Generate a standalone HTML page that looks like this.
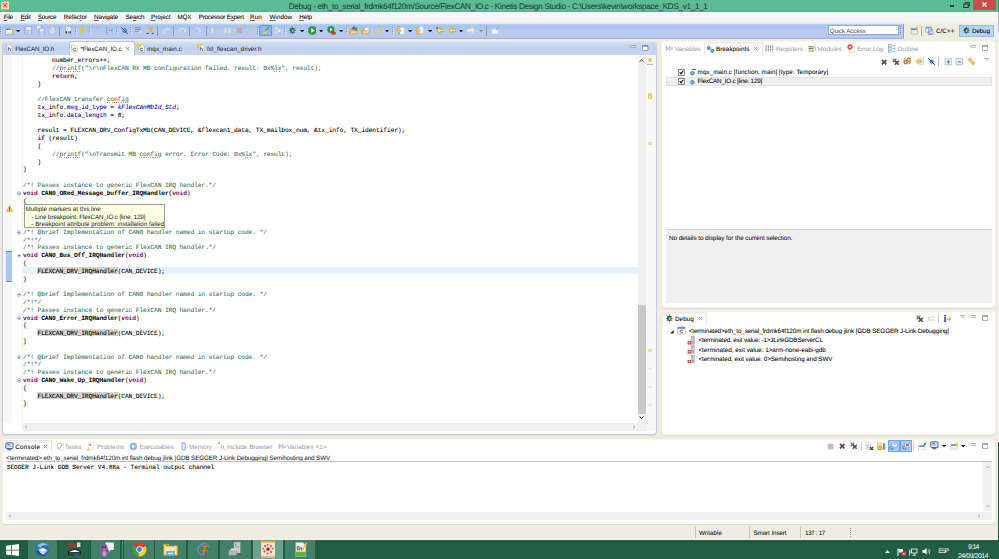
<!DOCTYPE html>
<html lang="en"><head><meta charset="utf-8"><title>Debug - Kinetis Design Studio</title>
<style>
html,body{margin:0;padding:0;}
body{width:999px;height:559px;overflow:hidden;position:relative;background:#f0ece0;font-family:"Liberation Sans",sans-serif;text-rendering:geometricPrecision;-webkit-font-smoothing:antialiased;}
body div,body span,body svg{position:absolute;box-sizing:border-box;}
u{text-decoration-thickness:.5px;text-underline-offset:.5px;text-decoration-color:rgba(0,0,0,.4);}
body span{white-space:pre;}
.d{text-shadow:0 0 .12px rgba(0,0,0,.3);}
.m{font-family:"Liberation Mono",monospace;text-shadow:0 0 .14px rgba(0,0,0,.28);}
</style></head>
<body>
<div style="left:0.00px;top:0.00px;width:999.00px;height:11.80px;background:#5bbb92;border-bottom:0.5px solid #55b389;"></div>
<span style="left:288.75px;top:2px;font-size:8.2px;line-height:10.66px;color:#1c3a2e;letter-spacing:-0.336px;text-shadow:none;">Debug - eth_to_serial_frdmk64f120m/Source/FlexCAN_IO.c - Kinetis Design Studio - C:\Users\kevin\workspace_KDS_v1_1_1</span>
<div style="left:973.00px;top:0.00px;width:23.00px;height:9.50px;background:#c7504f;"></div>
<div style="left:0.00px;top:11.80px;width:999.00px;height:10.60px;background:linear-gradient(#fdfdfd 0%,#f5f6f7 10%,#f5f6f7 87%,#f1f0ea 92%,#f1f0ea 100%);"></div>
<span class="d" style="left:3.70px;top:14px;font-size:6.3px;line-height:8.19px;color:#151515;letter-spacing:-0.263px;"><u>F</u>ile</span>
<span class="d" style="left:20.40px;top:14px;font-size:6.3px;line-height:8.19px;color:#151515;letter-spacing:-0.164px;"><u>E</u>dit</span>
<span class="d" style="left:37.80px;top:14px;font-size:6.3px;line-height:8.19px;color:#151515;letter-spacing:-0.260px;"><u>S</u>ource</span>
<span class="d" style="left:63.80px;top:14px;font-size:6.3px;line-height:8.19px;color:#151515;letter-spacing:-0.101px;">Refac<u>t</u>or</span>
<span class="d" style="left:94.10px;top:14px;font-size:6.3px;line-height:8.19px;color:#151515;letter-spacing:-0.083px;"><u>N</u>avigate</span>
<span class="d" style="left:125.60px;top:14px;font-size:6.3px;line-height:8.19px;color:#151515;letter-spacing:-0.210px;">Se<u>a</u>rch</span>
<span class="d" style="left:151.10px;top:14px;font-size:6.3px;line-height:8.19px;color:#151515;letter-spacing:-0.030px;"><u>P</u>roject</span>
<span class="d" style="left:177.50px;top:14px;font-size:6.3px;line-height:8.19px;color:#151515;letter-spacing:-0.183px;">MQX</span>
<span class="d" style="left:198.70px;top:14px;font-size:6.3px;line-height:8.19px;color:#151515;letter-spacing:-0.207px;">Processor E<u>x</u>pert</span>
<span class="d" style="left:250.00px;top:14px;font-size:6.3px;line-height:8.19px;color:#151515;letter-spacing:0.148px;"><u>R</u>un</span>
<span class="d" style="left:269.50px;top:14px;font-size:6.3px;line-height:8.19px;color:#151515;letter-spacing:0.016px;"><u>W</u>indow</span>
<span class="d" style="left:299.20px;top:14px;font-size:6.3px;line-height:8.19px;color:#151515;letter-spacing:-0.039px;"><u>H</u>elp</span>
<div style="left:0.00px;top:22.30px;width:999.00px;height:16.60px;background:#f0ece0;"></div>
<div style="left:0.00px;top:22.30px;width:904.40px;height:16.60px;background:linear-gradient(#eef2fb 0%,#dfe8f9 8%,#a9c6ee 17%,#a9c5ee 37%,#b6c9ef 43%,#b7c9ee 92%,#9db1d9 95%,#9db1d9 100%);"></div>
<div style="left:904.40px;top:22.30px;width:95.00px;height:2.00px;background:linear-gradient(#f3f3f0,#f2eddf);"></div>
<div style="left:0.00px;top:38.90px;width:999.00px;height:501.10px;background:#f0ece0;"></div>
<div style="left:0.00px;top:539.00px;width:999.00px;height:1.00px;background:#f7f4ea;"></div>
<div style="left:0.00px;top:540.00px;width:999.00px;height:19.00px;background:#215c45;"></div>
<div style="left:2.00px;top:41.00px;width:655.00px;height:394.00px;background:#fff;border:1px solid #bccdf0;border-top:none;border-radius:4px;box-shadow:0 1px 1px rgba(110,100,70,.13);"></div>
<div style="left:2.00px;top:41.00px;width:655.00px;height:14.20px;background:linear-gradient(#dde8f9 0%,#cfdef6 15%,#c4d6f3 30%,#bcd2f1 55%,#c6d5f2 62%,#c9d7f4 94%,#bccbe8 100%);border-radius:4px 4px 0 0;"></div>
<div style="left:69.00px;top:41.30px;width:66.30px;height:14.20px;background:#fff;border-radius:3px 3px 0 0;border:0.5px solid #b4c6ea;border-bottom:none;"></div>
<span style="left:15.30px;top:46px;font-size:6.3px;line-height:8.19px;color:#222;letter-spacing:-0.159px;text-shadow:none;">FlexCAN_IO.h</span>
<span style="left:80.50px;top:46px;font-size:6.3px;line-height:8.19px;color:#111;letter-spacing:-0.132px;text-shadow:none;">*FlexCAN_IO.c</span>
<span style="left:147.00px;top:46px;font-size:6.3px;line-height:8.19px;color:#222;letter-spacing:0.104px;text-shadow:none;">mqx_main.c</span>
<span style="left:207.00px;top:46px;font-size:6.3px;line-height:8.19px;color:#222;letter-spacing:0.029px;text-shadow:none;">fsl_flexcan_driver.h</span>
<div style="left:2.80px;top:55.50px;width:9.20px;height:367.00px;background:#f8f8f8;"></div>
<div style="left:21.80px;top:55.50px;width:0.50px;height:367.00px;background:#f1f1f1;"></div>
<div style="left:6.20px;top:251.10px;width:5.70px;height:30.90px;background:#a8c7f4;border-top:0.7px solid #5f8fdc;border-bottom:0.7px solid #5f8fdc;"></div>
<div style="left:23.00px;top:266.80px;width:615.00px;height:7.20px;background:#e8f2fe;"></div>
<div style="left:638.00px;top:55.50px;width:8.00px;height:367.80px;background:#f0f0f0;"></div>
<div style="left:638.00px;top:305.00px;width:8.00px;height:108.50px;background:#c9c9c9;"></div>
<div style="left:646.00px;top:55.50px;width:10.00px;height:375.80px;background:#f8f8f8;"></div>
<div style="left:22.00px;top:423.20px;width:616.00px;height:7.60px;background:#f0f0f0;"></div>
<div style="left:638.00px;top:423.20px;width:8.00px;height:7.60px;background:#f0f0f0;"></div>
<span class="m" style="left:52.12px;top:57px;font-size:6.3px;line-height:7.8px;color:#000;letter-spacing:-0.140px;">number_errors++;</span>
<span class="m" style="left:52.12px;top:65px;font-size:6.3px;line-height:7.8px;color:#3f7f5f;letter-spacing:-0.140px;">//printf("\r\nFlexCAN RX MB configuration failed. result: 0x%lx", result);</span>
<span class="m" style="left:52.12px;top:73px;font-size:6.3px;line-height:7.8px;color:#7f0055;font-weight:bold;text-shadow:none;letter-spacing:-0.140px;">return</span>
<span class="m" style="left:73.96px;top:73px;font-size:6.3px;line-height:7.8px;color:#000;letter-spacing:-0.140px;">;</span>
<span class="m" style="left:37.56px;top:81px;font-size:6.3px;line-height:7.8px;color:#000;letter-spacing:-0.140px;">}</span>
<span class="m" style="left:37.56px;top:96px;font-size:6.3px;line-height:7.8px;color:#3f7f5f;letter-spacing:-0.140px;">//FlexCAN transfer config</span>
<span class="m" style="left:37.56px;top:104px;font-size:6.3px;line-height:7.8px;color:#000;letter-spacing:-0.140px;">tx_info.</span>
<span class="m" style="left:66.68px;top:104px;font-size:6.3px;line-height:7.8px;color:#0000c0;letter-spacing:-0.140px;">msg_id_type</span>
<span class="m" style="left:106.72px;top:104px;font-size:6.3px;line-height:7.8px;color:#000;letter-spacing:-0.140px;"> = </span>
<span class="m" style="left:117.64px;top:104px;font-size:6.3px;line-height:7.8px;color:#0000c0;font-style:italic;letter-spacing:-0.140px;">kFlexCanMbId_Std</span>
<span class="m" style="left:175.88px;top:104px;font-size:6.3px;line-height:7.8px;color:#000;letter-spacing:-0.140px;">;</span>
<span class="m" style="left:37.56px;top:112px;font-size:6.3px;line-height:7.8px;color:#000;letter-spacing:-0.140px;">tx_info.</span>
<span class="m" style="left:66.68px;top:112px;font-size:6.3px;line-height:7.8px;color:#0000c0;letter-spacing:-0.140px;">data_length</span>
<span class="m" style="left:106.72px;top:112px;font-size:6.3px;line-height:7.8px;color:#000;letter-spacing:-0.140px;"> = 8;</span>
<span class="m" style="left:37.56px;top:127px;font-size:6.3px;line-height:7.8px;color:#000;letter-spacing:-0.140px;">result = FLEXCAN_DRV_ConfigTxMb(CAN_DEVICE, &amp;flexcan1_data, TX_mailbox_num, &amp;tx_info, TX_identifier);</span>
<span class="m" style="left:37.56px;top:135px;font-size:6.3px;line-height:7.8px;color:#7f0055;font-weight:bold;text-shadow:none;letter-spacing:-0.140px;">if</span>
<span class="m" style="left:44.84px;top:135px;font-size:6.3px;line-height:7.8px;color:#000;letter-spacing:-0.140px;"> (result)</span>
<span class="m" style="left:37.56px;top:143px;font-size:6.3px;line-height:7.8px;color:#000;letter-spacing:-0.140px;">{</span>
<span class="m" style="left:52.12px;top:151px;font-size:6.3px;line-height:7.8px;color:#3f7f5f;letter-spacing:-0.140px;">//printf("\nTransmit MB config error. Error Code: 0x%lx", result);</span>
<span class="m" style="left:37.56px;top:159px;font-size:6.3px;line-height:7.8px;color:#000;letter-spacing:-0.140px;">}</span>
<span class="m" style="left:23.00px;top:166px;font-size:6.3px;line-height:7.8px;color:#000;letter-spacing:-0.140px;">}</span>
<span class="m" style="left:23.00px;top:182px;font-size:6.3px;line-height:7.8px;color:#3f7f5f;letter-spacing:-0.140px;">/*! Passes instance to generic FlexCAN IRQ handler.*/</span>
<span class="m" style="left:23.00px;top:190px;font-size:6.3px;line-height:7.8px;color:#7f0055;font-weight:bold;text-shadow:none;letter-spacing:-0.140px;">void</span>
<span class="m" style="left:37.56px;top:190px;font-size:6.3px;line-height:7.8px;color:#000;font-weight:bold;text-shadow:none;letter-spacing:-0.140px;"> CAN0_ORed_Message_buffer_IRQHandler</span>
<span class="m" style="left:168.60px;top:190px;font-size:6.3px;line-height:7.8px;color:#000;letter-spacing:-0.140px;">(</span>
<span class="m" style="left:172.24px;top:190px;font-size:6.3px;line-height:7.8px;color:#7f0055;font-weight:bold;text-shadow:none;letter-spacing:-0.140px;">void</span>
<span class="m" style="left:186.80px;top:190px;font-size:6.3px;line-height:7.8px;color:#000;letter-spacing:-0.140px;">)</span>
<span class="m" style="left:23.00px;top:198px;font-size:6.3px;line-height:7.8px;color:#000;letter-spacing:-0.140px;">{</span>
<div style="left:37.26px;top:203.90px;width:80.58px;height:7.40px;background:#d4d4d4;"></div>
<span class="m" style="left:37.56px;top:205px;font-size:6.3px;line-height:7.8px;color:#000;letter-spacing:-0.140px;">FLEXCAN_DRV_IRQHandler</span>
<span class="m" style="left:117.64px;top:205px;font-size:6.3px;line-height:7.8px;color:#000;letter-spacing:-0.140px;">(CAN_DEVICE);</span>
<span class="m" style="left:23.00px;top:213px;font-size:6.3px;line-height:7.8px;color:#000;letter-spacing:-0.140px;">}</span>
<span class="m" style="left:23.00px;top:229px;font-size:6.3px;line-height:7.8px;color:#3f7f5f;letter-spacing:-0.140px;">/*! @brief Implementation of CAN0 handler named in startup code. */</span>
<span class="m" style="left:23.00px;top:237px;font-size:6.3px;line-height:7.8px;color:#3f7f5f;letter-spacing:-0.140px;">/*!*/</span>
<span class="m" style="left:23.00px;top:244px;font-size:6.3px;line-height:7.8px;color:#3f7f5f;letter-spacing:-0.140px;">/*! Passes instance to generic FlexCAN IRQ handler.*/</span>
<span class="m" style="left:23.00px;top:252px;font-size:6.3px;line-height:7.8px;color:#7f0055;font-weight:bold;text-shadow:none;letter-spacing:-0.140px;">void</span>
<span class="m" style="left:37.56px;top:252px;font-size:6.3px;line-height:7.8px;color:#000;font-weight:bold;text-shadow:none;letter-spacing:-0.140px;"> CAN0_Bus_Off_IRQHandler</span>
<span class="m" style="left:124.92px;top:252px;font-size:6.3px;line-height:7.8px;color:#000;letter-spacing:-0.140px;">(</span>
<span class="m" style="left:128.56px;top:252px;font-size:6.3px;line-height:7.8px;color:#7f0055;font-weight:bold;text-shadow:none;letter-spacing:-0.140px;">void</span>
<span class="m" style="left:143.12px;top:252px;font-size:6.3px;line-height:7.8px;color:#000;letter-spacing:-0.140px;">)</span>
<span class="m" style="left:23.00px;top:260px;font-size:6.3px;line-height:7.8px;color:#000;letter-spacing:-0.140px;">{</span>
<div style="left:37.26px;top:266.90px;width:80.58px;height:7.40px;background:#d4d4d4;"></div>
<span class="m" style="left:37.56px;top:268px;font-size:6.3px;line-height:7.8px;color:#000;letter-spacing:-0.140px;">FLEXCAN_DRV_IRQHandler</span>
<span class="m" style="left:117.64px;top:268px;font-size:6.3px;line-height:7.8px;color:#000;letter-spacing:-0.140px;">(CAN_DEVICE);</span>
<span class="m" style="left:23.00px;top:276px;font-size:6.3px;line-height:7.8px;color:#000;letter-spacing:-0.140px;">}</span>
<span class="m" style="left:23.00px;top:291px;font-size:6.3px;line-height:7.8px;color:#3f7f5f;letter-spacing:-0.140px;">/*! @brief Implementation of CAN0 handler named in startup code. */</span>
<span class="m" style="left:23.00px;top:299px;font-size:6.3px;line-height:7.8px;color:#3f7f5f;letter-spacing:-0.140px;">/*!*/</span>
<span class="m" style="left:23.00px;top:307px;font-size:6.3px;line-height:7.8px;color:#3f7f5f;letter-spacing:-0.140px;">/*! Passes instance to generic FlexCAN IRQ handler.*/</span>
<span class="m" style="left:23.00px;top:315px;font-size:6.3px;line-height:7.8px;color:#7f0055;font-weight:bold;text-shadow:none;letter-spacing:-0.140px;">void</span>
<span class="m" style="left:37.56px;top:315px;font-size:6.3px;line-height:7.8px;color:#000;font-weight:bold;text-shadow:none;letter-spacing:-0.140px;"> CAN0_Error_IRQHandler</span>
<span class="m" style="left:117.64px;top:315px;font-size:6.3px;line-height:7.8px;color:#000;letter-spacing:-0.140px;">(</span>
<span class="m" style="left:121.28px;top:315px;font-size:6.3px;line-height:7.8px;color:#7f0055;font-weight:bold;text-shadow:none;letter-spacing:-0.140px;">void</span>
<span class="m" style="left:135.84px;top:315px;font-size:6.3px;line-height:7.8px;color:#000;letter-spacing:-0.140px;">)</span>
<span class="m" style="left:23.00px;top:322px;font-size:6.3px;line-height:7.8px;color:#000;letter-spacing:-0.140px;">{</span>
<div style="left:37.26px;top:328.90px;width:80.58px;height:7.40px;background:#d4d4d4;"></div>
<span class="m" style="left:37.56px;top:330px;font-size:6.3px;line-height:7.8px;color:#000;letter-spacing:-0.140px;">FLEXCAN_DRV_IRQHandler</span>
<span class="m" style="left:117.64px;top:330px;font-size:6.3px;line-height:7.8px;color:#000;letter-spacing:-0.140px;">(CAN_DEVICE);</span>
<span class="m" style="left:23.00px;top:338px;font-size:6.3px;line-height:7.8px;color:#000;letter-spacing:-0.140px;">}</span>
<span class="m" style="left:23.00px;top:354px;font-size:6.3px;line-height:7.8px;color:#3f7f5f;letter-spacing:-0.140px;">/*! @brief Implementation of CAN0 handler named in startup code. */</span>
<span class="m" style="left:23.00px;top:361px;font-size:6.3px;line-height:7.8px;color:#3f7f5f;letter-spacing:-0.140px;">/*!*/</span>
<span class="m" style="left:23.00px;top:369px;font-size:6.3px;line-height:7.8px;color:#3f7f5f;letter-spacing:-0.140px;">/*! Passes instance to generic FlexCAN IRQ handler.*/</span>
<span class="m" style="left:23.00px;top:377px;font-size:6.3px;line-height:7.8px;color:#7f0055;font-weight:bold;text-shadow:none;letter-spacing:-0.140px;">void</span>
<span class="m" style="left:37.56px;top:377px;font-size:6.3px;line-height:7.8px;color:#000;font-weight:bold;text-shadow:none;letter-spacing:-0.140px;"> CAN0_Wake_Up_IRQHandler</span>
<span class="m" style="left:124.92px;top:377px;font-size:6.3px;line-height:7.8px;color:#000;letter-spacing:-0.140px;">(</span>
<span class="m" style="left:128.56px;top:377px;font-size:6.3px;line-height:7.8px;color:#7f0055;font-weight:bold;text-shadow:none;letter-spacing:-0.140px;">void</span>
<span class="m" style="left:143.12px;top:377px;font-size:6.3px;line-height:7.8px;color:#000;letter-spacing:-0.140px;">)</span>
<span class="m" style="left:23.00px;top:385px;font-size:6.3px;line-height:7.8px;color:#000;letter-spacing:-0.140px;">{</span>
<div style="left:37.26px;top:391.90px;width:80.58px;height:7.40px;background:#d4d4d4;"></div>
<span class="m" style="left:37.56px;top:393px;font-size:6.3px;line-height:7.8px;color:#000;letter-spacing:-0.140px;">FLEXCAN_DRV_IRQHandler</span>
<span class="m" style="left:117.64px;top:393px;font-size:6.3px;line-height:7.8px;color:#000;letter-spacing:-0.140px;">(CAN_DEVICE);</span>
<span class="m" style="left:23.00px;top:400px;font-size:6.3px;line-height:7.8px;color:#000;letter-spacing:-0.140px;">}</span>
<div style="left:16.5px;top:191.15px;width:4.4px;height:4.4px;border-radius:50%;border:0.6px solid #b3c0dc;background:#e9eef8;"></div>
<div style="left:17.60px;top:193.05px;width:2.20px;height:0.60px;background:#8391b5;"></div>
<div style="left:16.5px;top:230.15px;width:4.4px;height:4.4px;border-radius:50%;border:0.6px solid #b3c0dc;background:#e9eef8;"></div>
<div style="left:17.60px;top:232.05px;width:2.20px;height:0.60px;background:#8391b5;"></div>
<div style="left:16.5px;top:253.55px;width:4.4px;height:4.4px;border-radius:50%;border:0.6px solid #b3c0dc;background:#e9eef8;"></div>
<div style="left:17.60px;top:255.45px;width:2.20px;height:0.60px;background:#8391b5;"></div>
<div style="left:16.5px;top:292.55px;width:4.4px;height:4.4px;border-radius:50%;border:0.6px solid #b3c0dc;background:#e9eef8;"></div>
<div style="left:17.60px;top:294.45px;width:2.20px;height:0.60px;background:#8391b5;"></div>
<div style="left:16.5px;top:315.95px;width:4.4px;height:4.4px;border-radius:50%;border:0.6px solid #b3c0dc;background:#e9eef8;"></div>
<div style="left:17.60px;top:317.85px;width:2.20px;height:0.60px;background:#8391b5;"></div>
<div style="left:16.5px;top:354.95px;width:4.4px;height:4.4px;border-radius:50%;border:0.6px solid #b3c0dc;background:#e9eef8;"></div>
<div style="left:17.60px;top:356.85px;width:2.20px;height:0.60px;background:#8391b5;"></div>
<div style="left:16.5px;top:378.35px;width:4.4px;height:4.4px;border-radius:50%;border:0.6px solid #b3c0dc;background:#e9eef8;"></div>
<div style="left:17.60px;top:380.25px;width:2.20px;height:0.60px;background:#8391b5;"></div>
<div style="left:24.00px;top:204.00px;width:141.00px;height:24.00px;background:#ffffe1;border:1px solid #9c9c94;"></div>
<span style="left:25.50px;top:206px;font-size:6.3px;line-height:8.19px;color:#222;letter-spacing:-0.035px;text-shadow:none;">Multiple markers at this line</span>
<span style="left:31.30px;top:214px;font-size:6.3px;line-height:8.19px;color:#222;letter-spacing:-0.132px;text-shadow:none;">- Line breakpoint: FlexCAN_IO.c [line: 129]</span>
<span style="left:31.30px;top:221px;font-size:6.3px;line-height:8.19px;color:#222;letter-spacing:-0.007px;text-shadow:none;">- Breakpoint attribute problem: installation failed</span>
<div style="left:59.40px;top:70.90px;width:21.84px;height:0.7px;background:repeating-linear-gradient(90deg,#e2574c 0 0.9px,transparent 0.9px 1.8px);opacity:.75;"></div>
<div style="left:274.16px;top:70.90px;width:7.28px;height:0.7px;background:repeating-linear-gradient(90deg,#e2574c 0 0.9px,transparent 0.9px 1.8px);opacity:.75;"></div>
<div style="left:106.72px;top:101.90px;width:21.84px;height:0.7px;background:repeating-linear-gradient(90deg,#e2574c 0 0.9px,transparent 0.9px 1.8px);opacity:.75;"></div>
<div style="left:59.40px;top:156.90px;width:21.84px;height:0.7px;background:repeating-linear-gradient(90deg,#e2574c 0 0.9px,transparent 0.9px 1.8px);opacity:.75;"></div>
<div style="left:139.48px;top:156.90px;width:21.84px;height:0.7px;background:repeating-linear-gradient(90deg,#e2574c 0 0.9px,transparent 0.9px 1.8px);opacity:.75;"></div>
<div style="left:245.04px;top:156.90px;width:7.28px;height:0.7px;background:repeating-linear-gradient(90deg,#e2574c 0 0.9px,transparent 0.9px 1.8px);opacity:.75;"></div>
<div style="left:661.00px;top:41.00px;width:334.00px;height:267.00px;background:#fff;border-radius:4px;border:1px solid #f9f7f3;border-left-color:#f4f1e8;border-right:none;box-shadow:0 1px 1px rgba(110,100,70,.13);"></div>
<div style="left:704.00px;top:42.00px;width:59.00px;height:13.00px;background:linear-gradient(#f6f6f6,#fff 60%);border-radius:3px 3px 0 0;border:0.6px solid #e9e9ec;border-bottom:none;"></div>
<span style="left:675.00px;top:46px;font-size:6.3px;line-height:8.19px;color:#94979f;letter-spacing:-0.033px;">Variables</span>
<span class="d" style="left:716.00px;top:46px;font-size:6.3px;line-height:8.19px;color:#111;letter-spacing:0.021px;">Breakpoints</span>
<span style="left:776.00px;top:46px;font-size:6.3px;line-height:8.19px;color:#94979f;letter-spacing:0.043px;">Registers</span>
<span style="left:817.50px;top:46px;font-size:6.3px;line-height:8.19px;color:#94979f;letter-spacing:0.070px;">Modules</span>
<span style="left:857.00px;top:46px;font-size:6.3px;line-height:8.19px;color:#94979f;letter-spacing:0.026px;">Error Log</span>
<span style="left:897.50px;top:46px;font-size:6.3px;line-height:8.19px;color:#94979f;letter-spacing:0.148px;">Outline</span>
<div style="left:665.80px;top:77.00px;width:325.80px;height:9.00px;background:#f0f0f0;border:0.5px solid #e3e3e3;"></div>
<span class="d" style="left:697.60px;top:69px;font-size:6.3px;line-height:8.19px;color:#111;letter-spacing:0.046px;">mqx_main.c [function: main] [type: Temporary]</span>
<span class="d" style="left:697.60px;top:78px;font-size:6.3px;line-height:8.19px;color:#111;letter-spacing:-0.201px;">FlexCAN_IO.c [line: 129]</span>
<div style="left:665.60px;top:228.60px;width:326.00px;height:74.90px;background:#f0f0f0;border-top:0.7px solid #d2d2d2;"></div>
<span class="d" style="left:669.00px;top:235px;font-size:6.3px;line-height:8.19px;color:#222;letter-spacing:-0.046px;">No details to display for the current selection.</span>
<div style="left:661.00px;top:311.00px;width:334.00px;height:124.00px;background:#fff;border-radius:4px;border:1px solid #f9f7f3;border-left-color:#f4f1e8;border-right:none;box-shadow:0 1px 1px rgba(110,100,70,.13);"></div>
<div style="left:662.00px;top:312.00px;width:45.00px;height:13.00px;background:linear-gradient(#f6f6f6,#fff 60%);border-radius:3px 3px 0 0;border:0.6px solid #e9e9ec;border-bottom:none;"></div>
<span class="d" style="left:675.00px;top:316px;font-size:6.3px;line-height:8.19px;color:#111;letter-spacing:0.067px;">Debug</span>
<span class="d" style="left:688.80px;top:328px;font-size:6.3px;line-height:8.19px;color:#111;letter-spacing:-0.117px;">&lt;terminated&gt;eth_to_serial_frdmk64f120m int flash debug jlink [GDB SEGGER J-Link Debugging]</span>
<span class="d" style="left:698.40px;top:337px;font-size:6.3px;line-height:8.19px;color:#111;letter-spacing:-0.157px;">&lt;terminated, exit value: -1&gt;JLinkGDBServerCL</span>
<span class="d" style="left:698.40px;top:347px;font-size:6.3px;line-height:8.19px;color:#111;letter-spacing:-0.010px;">&lt;terminated, exit value: 1&gt;arm-none-eabi-gdb</span>
<span class="d" style="left:698.40px;top:356px;font-size:6.3px;line-height:8.19px;color:#111;letter-spacing:-0.069px;">&lt;terminated, exit value: 0&gt;Semihosting and SWV</span>
<div style="left:2.00px;top:439.00px;width:993.00px;height:85.00px;background:#fff;border-radius:4px;border:1px solid #f9f7f3;border-left-color:#f6f4ee;border-right:none;border-bottom:none;box-shadow:0 1px 1px rgba(110,100,70,.13);"></div>
<div style="left:3.00px;top:440.00px;width:49.00px;height:13.00px;background:linear-gradient(#f6f6f6,#fff 60%);border-radius:3px 3px 0 0;border:0.6px solid #e3e6ee;border-bottom:none;"></div>
<span class="d" style="left:15.30px;top:444px;font-size:6.3px;line-height:8.19px;color:#111;letter-spacing:0.255px;">Console</span>
<span style="left:64.70px;top:444px;font-size:6.3px;line-height:8.19px;color:#94979f;letter-spacing:0.179px;">Tasks</span>
<span style="left:97.00px;top:444px;font-size:6.3px;line-height:8.19px;color:#94979f;letter-spacing:0.074px;">Problems</span>
<span style="left:139.50px;top:444px;font-size:6.3px;line-height:8.19px;color:#94979f;letter-spacing:-0.020px;">Executables</span>
<span style="left:188.90px;top:444px;font-size:6.3px;line-height:8.19px;color:#94979f;letter-spacing:0.008px;">Memory</span>
<span style="left:227.00px;top:444px;font-size:6.3px;line-height:8.19px;color:#94979f;letter-spacing:0.009px;">Include Browser</span>
<span style="left:287.00px;top:444px;font-size:6.3px;line-height:8.19px;color:#94979f;letter-spacing:0.099px;">Variables &lt;1&gt;</span>
<span style="left:6.10px;top:455px;font-size:6.3px;line-height:8.19px;color:#111;letter-spacing:-0.118px;text-shadow:none;">&lt;terminated&gt; eth_to_serial_frdmk64f120m int flash debug jlink [GDB SEGGER J-Link Debugging] Semihosting and SWV</span>
<div style="left:6.00px;top:461.40px;width:986.00px;height:0.70px;background:#bdbdbd;"></div>
<span class="m" style="left:6.80px;top:464px;font-size:6.3px;line-height:7.8px;color:#000;letter-spacing:-0.140px;">SEGGER J-Link GDB Server V4.88a - Terminal output channel</span>
<div style="left:983.40px;top:462.10px;width:8.60px;height:49.40px;background:#f0f0f0;"></div>
<div style="left:6.20px;top:512.00px;width:985.80px;height:7.80px;background:#f0f0f0;"></div>
<div style="left:695.00px;top:526.50px;width:0.60px;height:11.00px;background:#c8c4b8;"></div>
<div style="left:748.50px;top:526.50px;width:0.60px;height:11.00px;background:#c8c4b8;"></div>
<div style="left:800.00px;top:526.50px;width:0.60px;height:11.00px;background:#c8c4b8;"></div>
<span class="d" style="left:699.00px;top:530px;font-size:6.3px;line-height:8.19px;color:#2a2a2a;letter-spacing:0.001px;">Writable</span>
<span class="d" style="left:753.50px;top:530px;font-size:6.3px;line-height:8.19px;color:#2a2a2a;letter-spacing:-0.109px;">Smart Insert</span>
<span class="d" style="left:805.00px;top:530px;font-size:6.3px;line-height:8.19px;color:#2a2a2a;letter-spacing:-0.346px;">137 : 17</span>
<div style="left:850.00px;top:527.50px;width:0.70px;height:0.90px;background:#9a978c;"></div>
<div style="left:850.00px;top:529.70px;width:0.70px;height:0.90px;background:#9a978c;"></div>
<div style="left:850.00px;top:531.90px;width:0.70px;height:0.90px;background:#9a978c;"></div>
<div style="left:850.00px;top:534.10px;width:0.70px;height:0.90px;background:#9a978c;"></div>
<div style="left:850.00px;top:536.30px;width:0.70px;height:0.90px;background:#9a978c;"></div>
<div style="left:27.70px;top:540.00px;width:29.60px;height:19.00px;background:#43806a;"></div>
<div style="left:59.00px;top:540.00px;width:31.00px;height:19.00px;background:#27634b;"></div>
<div style="left:91.30px;top:540.00px;width:28.70px;height:19.00px;background:#43806a;"></div>
<div style="left:124.00px;top:540.00px;width:30.30px;height:19.00px;background:#43806a;"></div>
<div style="left:155.40px;top:540.00px;width:30.60px;height:19.00px;background:#43806a;"></div>
<div style="left:187.80px;top:540.00px;width:30.70px;height:19.00px;background:#43806a;"></div>
<div style="left:220.30px;top:540.00px;width:30.60px;height:19.00px;background:#43806a;"></div>
<div style="left:252.70px;top:540.00px;width:30.60px;height:19.00px;background:#6d9f8d;"></div>
<div style="left:285.00px;top:540.00px;width:29.90px;height:19.00px;background:#43806a;"></div>
<div style="left:121.60px;top:540.50px;width:0.80px;height:18.50px;background:#4f8a74;"></div>
<span style="left:938.30px;top:548px;font-size:6.6px;line-height:8.58px;color:#fff;letter-spacing:-1.169px;text-shadow:none;">ESP</span>
<span style="left:968.10px;top:544px;font-size:6.8px;line-height:8.84px;color:#fff;letter-spacing:-0.684px;text-shadow:none;">9:14</span>
<span style="left:957.90px;top:553px;font-size:6.8px;line-height:8.84px;color:#fff;letter-spacing:-0.373px;text-shadow:none;">24/09/2014</span>
<div style="left:0.00px;top:27.00px;width:1.00px;height:1.00px;background:#8d9abb;"></div>
<div style="left:1.00px;top:28.00px;width:1.00px;height:1.00px;background:rgba(255,255,255,.55);"></div>
<div style="left:0.00px;top:29.00px;width:1.00px;height:1.00px;background:#8d9abb;"></div>
<div style="left:1.00px;top:30.00px;width:1.00px;height:1.00px;background:rgba(255,255,255,.55);"></div>
<div style="left:0.00px;top:31.00px;width:1.00px;height:1.00px;background:#8d9abb;"></div>
<div style="left:1.00px;top:32.00px;width:1.00px;height:1.00px;background:rgba(255,255,255,.55);"></div>
<div style="left:0.00px;top:33.00px;width:1.00px;height:1.00px;background:#8d9abb;"></div>
<div style="left:1.00px;top:34.00px;width:1.00px;height:1.00px;background:rgba(255,255,255,.55);"></div>
<svg style="left:4.60px;top:26.20px;" width="8.8" height="8.8" viewBox="0 0 16 16"><rect x="1.5" y="4" width="12" height="10.5" fill="#fff" stroke="#8a97b5"/><rect x="2" y="4.5" width="11" height="2.5" fill="#4f7fc8"/><rect x="3" y="10" width="9" height="3.5" fill="#f6e6b4"/><path d="M12.5 0.5l1.2 2.3 2.5.4-1.8 1.8.4 2.5-2.3-1.2-2.3 1.2.4-2.5L8.800 3.2l2.500-.4z" fill="#f8d257" stroke="#d9a21b" stroke-width=".6"/></svg>
<svg style="left:16.30px;top:29.90px;" width="4.2" height="2.3" viewBox="0 0 8 4.4"><path d="M0 0H8L4 4.4Z" fill="#111"/></svg>
<svg style="left:23.60px;top:26.10px;" width="8.8" height="8.8" viewBox="0 0 16 16"><rect x="1.5" y="1.5" width="13" height="13" rx="1" fill="#b3c4e6" stroke="#8ba0cf"/><rect x="4" y="2" width="8" height="5" fill="#eef2fa"/><rect x="4.500" y="9.500" width="7" height="5" fill="#d5def0"/><rect x="6" y="10.5" width="2" height="3" fill="#8ba0cf"/></svg>
<svg style="left:35.90px;top:26.10px;" width="8.8" height="8.8" viewBox="0 0 16 16"><g transform="translate(-1.5,-1.500) scale(.8)"><rect x="1.5" y="1.5" width="13" height="13" rx="1" fill="#b3c4e6" stroke="#8ba0cf"/><rect x="4" y="2" width="8" height="5" fill="#eef2fa"/><rect x="4.500" y="9.500" width="7" height="5" fill="#d5def0"/><rect x="6" y="10.5" width="2" height="3" fill="#8ba0cf"/></g><g transform="translate(4,4) scale(.8)"><rect x="1.5" y="1.5" width="13" height="13" rx="1" fill="#b3c4e6" stroke="#8ba0cf"/><rect x="4" y="2" width="8" height="5" fill="#eef2fa"/><rect x="4.500" y="9.500" width="7" height="5" fill="#d5def0"/><rect x="6" y="10.5" width="2" height="3" fill="#8ba0cf"/></g></svg>
<svg style="left:47.60px;top:26.10px;" width="8.8" height="8.8" viewBox="0 0 16 16"><rect x="4" y="2" width="8" height="6" fill="#fff" stroke="#9aa9cc"/><rect x="5.500" y="3.500" width="4" height="1.2" fill="#e8a33d"/><rect x="1.500" y="7" width="13" height="6" rx="1.5" fill="#e4eaf6" stroke="#7f95c9"/><rect x="3.500" y="11" width="9" height="3" fill="#fff" stroke="#7f95c9" stroke-width=".7"/></svg>
<div style="left:59.20px;top:26.00px;width:0.80px;height:9.50px;background:#8c98b4;"></div>
<svg style="left:64.20px;top:26.10px;" width="8.8" height="8.8" viewBox="0 0 16 16"><path d="M3 1.500H10L13 4.500V14.500H3Z" fill="#fff" stroke="#9099b3"/><rect x="2" y="9" width="12" height="4.500" fill="#f3f4f8"/><rect x="2.500" y="9.500" width="3" height="4" fill="#27375f"/><rect x="6.800" y="9.500" width="1.600" height="4" fill="#27375f"/><rect x="10" y="9.500" width="3" height="4" fill="#27375f"/><rect x="5" y="5" width="6" height="1" fill="#b9c0d4"/><rect x="5" y="7" width="6" height="1" fill="#b9c0d4"/></svg>
<div style="left:75.00px;top:27.00px;width:1.00px;height:1.00px;background:#8d9abb;"></div>
<div style="left:76.00px;top:28.00px;width:1.00px;height:1.00px;background:rgba(255,255,255,.55);"></div>
<div style="left:75.00px;top:29.00px;width:1.00px;height:1.00px;background:#8d9abb;"></div>
<div style="left:76.00px;top:30.00px;width:1.00px;height:1.00px;background:rgba(255,255,255,.55);"></div>
<div style="left:75.00px;top:31.00px;width:1.00px;height:1.00px;background:#8d9abb;"></div>
<div style="left:76.00px;top:32.00px;width:1.00px;height:1.00px;background:rgba(255,255,255,.55);"></div>
<div style="left:75.00px;top:33.00px;width:1.00px;height:1.00px;background:#8d9abb;"></div>
<div style="left:76.00px;top:34.00px;width:1.00px;height:1.00px;background:rgba(255,255,255,.55);"></div>
<svg style="left:78.00px;top:26.10px;" width="8.8" height="8.8" viewBox="0 0 16 16"><path d="M9.500 0L3.500 8.800H7.500L5 16L12.500 6.500H8.500L11.500 0Z" fill="#f7c71a" stroke="#e5a90a" stroke-width=".5"/></svg>
<div style="left:89.00px;top:27.00px;width:1.00px;height:1.00px;background:#8d9abb;"></div>
<div style="left:90.00px;top:28.00px;width:1.00px;height:1.00px;background:rgba(255,255,255,.55);"></div>
<div style="left:89.00px;top:29.00px;width:1.00px;height:1.00px;background:#8d9abb;"></div>
<div style="left:90.00px;top:30.00px;width:1.00px;height:1.00px;background:rgba(255,255,255,.55);"></div>
<div style="left:89.00px;top:31.00px;width:1.00px;height:1.00px;background:#8d9abb;"></div>
<div style="left:90.00px;top:32.00px;width:1.00px;height:1.00px;background:rgba(255,255,255,.55);"></div>
<div style="left:89.00px;top:33.00px;width:1.00px;height:1.00px;background:#8d9abb;"></div>
<div style="left:90.00px;top:34.00px;width:1.00px;height:1.00px;background:rgba(255,255,255,.55);"></div>
<svg style="left:93.30px;top:26.30px;" width="8.8" height="8.8" viewBox="0 0 16 16"><path d="M3 8a5 5 0 0 0 10 0" fill="none" stroke="#cdc6ad" stroke-width="2.400"/><path d="M1 9l2-3 2.500 3z" fill="#cfc7ab"/><path d="M8 1l5 2.500-5 2.500z" fill="#a9c79f"/><rect x="7.300" y="1" width="1" height="8" fill="#b5b9a6"/></svg>
<svg style="left:104.60px;top:26.30px;" width="8.8" height="8.8" viewBox="0 0 16 16"><rect x="1.800" y="3" width="2" height="10" fill="#98a1b7"/><rect x="1" y="3" width="3.600" height="1.200" fill="#98a1b7"/><rect x="1" y="11.800" width="3.600" height="1.200" fill="#98a1b7"/><rect x="6" y="7" width="6" height="2" fill="#98a1b7"/><path d="M11 4.500l4 3.500-4 3.500z" fill="#98a1b7"/></svg>
<div style="left:116.00px;top:27.00px;width:1.00px;height:1.00px;background:#8d9abb;"></div>
<div style="left:117.00px;top:28.00px;width:1.00px;height:1.00px;background:rgba(255,255,255,.55);"></div>
<div style="left:116.00px;top:29.00px;width:1.00px;height:1.00px;background:#8d9abb;"></div>
<div style="left:117.00px;top:30.00px;width:1.00px;height:1.00px;background:rgba(255,255,255,.55);"></div>
<div style="left:116.00px;top:31.00px;width:1.00px;height:1.00px;background:#8d9abb;"></div>
<div style="left:117.00px;top:32.00px;width:1.00px;height:1.00px;background:rgba(255,255,255,.55);"></div>
<div style="left:116.00px;top:33.00px;width:1.00px;height:1.00px;background:#8d9abb;"></div>
<div style="left:117.00px;top:34.00px;width:1.00px;height:1.00px;background:rgba(255,255,255,.55);"></div>
<svg style="left:119.60px;top:26.20px;" width="8.8" height="8.8" viewBox="0 0 16 16"><circle cx="8.500" cy="8.500" r="3.800" fill="#5d9fd0" stroke="#3a74b4"/><circle cx="7.500" cy="7.500" r="1.500" fill="#a7d4e8"/><path d="M2 2L14.500 14.500" stroke="#2f4db0" stroke-width="1.800"/></svg>
<div style="left:130.00px;top:27.00px;width:1.00px;height:1.00px;background:#8d9abb;"></div>
<div style="left:131.00px;top:28.00px;width:1.00px;height:1.00px;background:rgba(255,255,255,.55);"></div>
<div style="left:130.00px;top:29.00px;width:1.00px;height:1.00px;background:#8d9abb;"></div>
<div style="left:131.00px;top:30.00px;width:1.00px;height:1.00px;background:rgba(255,255,255,.55);"></div>
<div style="left:130.00px;top:31.00px;width:1.00px;height:1.00px;background:#8d9abb;"></div>
<div style="left:131.00px;top:32.00px;width:1.00px;height:1.00px;background:rgba(255,255,255,.55);"></div>
<div style="left:130.00px;top:33.00px;width:1.00px;height:1.00px;background:#8d9abb;"></div>
<div style="left:131.00px;top:34.00px;width:1.00px;height:1.00px;background:rgba(255,255,255,.55);"></div>
<svg style="left:133.60px;top:26.10px;" width="8.8" height="8.8" viewBox="0 0 16 16"><rect x="1.500" y="2.500" width="11" height="1.500" fill="#7d8697"/><rect x="1.500" y="5.800" width="11" height="1.500" fill="#7d8697"/><rect x="1.500" y="9" width="7" height="1.500" fill="#7d8697"/><path d="M9 9.500H15L12 13.500Z" fill="#fff" stroke="#9aa3b5" stroke-width=".6"/></svg>
<svg style="left:145.60px;top:26.10px;" width="8.8" height="8.8" viewBox="0 0 16 16"><path d="M3 4H11M11 4L6.500 9.500M6.500 9.500H12" stroke="#d9972a" stroke-width="1.500" fill="none"/><circle cx="11.500" cy="4" r="2.300" fill="#f7c64a" stroke="#d9972a" stroke-width=".7"/><circle cx="6.500" cy="9.500" r="2.300" fill="#f7c64a" stroke="#d9972a" stroke-width=".7"/><rect x="1" y="13" width="3.500" height="1.500" fill="#222"/><rect x="10.500" y="13" width="3.500" height="1.500" fill="#222"/></svg>
<div style="left:157.10px;top:26.00px;width:0.80px;height:9.50px;background:#8c98b4;"></div>
<svg style="left:162.10px;top:26.60px;" width="8.8" height="8.8" viewBox="0 0 16 16"><path d="M4 13V8a4 4 0 0 1 4-4h3" fill="none" stroke="#e5e0d0" stroke-width="2"/><path d="M10 1l4 3-4 3z" fill="#e5e0d0"/><rect x="2" y="12" width="1.500" height="1.500" fill="#c9c4b0"/><rect x="12" y="12" width="1.500" height="1.500" fill="#c9c4b0"/></svg>
<div style="left:173.00px;top:26.00px;width:0.80px;height:9.50px;background:#8c98b4;"></div>
<svg style="left:178.10px;top:26.10px;" width="8.8" height="8.8" viewBox="0 0 16 16"><path d="M2.500 10a5.500 5.500 0 0 1 11 0" fill="none" stroke="#e5e0d0" stroke-width="2.200"/><path d="M10.500 9.500h5l-2.500 3.500z" fill="#e5e0d0"/><rect x="6.500" y="12" width="2" height="2" fill="#d8d2bb"/></svg>
<div style="left:189.30px;top:26.00px;width:0.80px;height:9.50px;background:#8c98b4;"></div>
<svg style="left:194.10px;top:26.30px;" width="8.8" height="8.8" viewBox="0 0 16 16"><path d="M2.500 4h5a3 3 0 0 1 3 3v3" fill="none" stroke="#e5e0d0" stroke-width="2"/><path d="M7.500 9.500h6l-3 3.500z" fill="#e5e0d0"/><rect x="2" y="12" width="1.800" height="1.800" fill="#d0cab4"/><rect x="13" y="12" width="1.800" height="1.800" fill="#d0cab4"/></svg>
<div style="left:205.60px;top:26.00px;width:0.80px;height:9.50px;background:#8c98b4;"></div>
<svg style="left:210.60px;top:26.10px;" width="8.8" height="8.8" viewBox="0 0 16 16"><rect x="1" y="3.500" width="3.200" height="9" fill="#e5e0d0"/><path d="M6 3l9 5-9 5z" fill="#b9d0b0"/></svg>
<svg style="left:222.80px;top:26.10px;" width="8.8" height="8.8" viewBox="0 0 16 16"><rect x="2.500" y="3" width="3.500" height="10" fill="#e5e0d0"/><rect x="9.500" y="3" width="3.500" height="10" fill="#e5e0d0"/></svg>
<svg style="left:234.60px;top:26.10px;" width="8.8" height="8.8" viewBox="0 0 16 16"><rect x="3" y="3" width="10" height="10" fill="#c9a4ac" stroke="#d3b6bd"/></svg>
<svg style="left:245.90px;top:26.10px;" width="8.8" height="8.8" viewBox="0 0 16 16"><path d="M3.500 12L7 4L10 10L13 3.500" fill="none" stroke="#c9c3ad" stroke-width="1.300"/><circle cx="3.500" cy="12" r="2" fill="#e9bfae"/><circle cx="13" cy="3.500" r="2" fill="#e9bfae"/></svg>
<div style="left:257.00px;top:27.00px;width:1.00px;height:1.00px;background:#8d9abb;"></div>
<div style="left:258.00px;top:28.00px;width:1.00px;height:1.00px;background:rgba(255,255,255,.55);"></div>
<div style="left:257.00px;top:29.00px;width:1.00px;height:1.00px;background:#8d9abb;"></div>
<div style="left:258.00px;top:30.00px;width:1.00px;height:1.00px;background:rgba(255,255,255,.55);"></div>
<div style="left:257.00px;top:31.00px;width:1.00px;height:1.00px;background:#8d9abb;"></div>
<div style="left:258.00px;top:32.00px;width:1.00px;height:1.00px;background:rgba(255,255,255,.55);"></div>
<div style="left:257.00px;top:33.00px;width:1.00px;height:1.00px;background:#8d9abb;"></div>
<div style="left:258.00px;top:34.00px;width:1.00px;height:1.00px;background:rgba(255,255,255,.55);"></div>
<div style="left:259.00px;top:24.70px;width:12.60px;height:11.40px;background:#8ebaf4;border:0.6px solid #5f9ae6;border-radius:1px;"></div>
<svg style="left:260.90px;top:26.00px;" width="8.8" height="8.8" viewBox="0 0 16 16"><path d="M14 2L8.500 9.500" stroke="#8a7a5a" stroke-width="2.400" stroke-linecap="round"/><path d="M9.500 8L3 13.500 2 14.500 9 13 11 10Z" fill="#f7e01f" stroke="#e0b800" stroke-width=".5"/></svg>
<svg style="left:273.10px;top:26.30px;" width="8.8" height="8.8" viewBox="0 0 16 16"><circle cx="6" cy="5" r="3" fill="#e3e3e3"/><circle cx="6" cy="11" r="3" fill="#dadada"/><circle cx="11" cy="8" r="3" fill="#e8e8e8"/><circle cx="7" cy="8" r="2.500" fill="#cfcfcf"/></svg>
<div style="left:284.00px;top:27.00px;width:1.00px;height:1.00px;background:#8d9abb;"></div>
<div style="left:285.00px;top:28.00px;width:1.00px;height:1.00px;background:rgba(255,255,255,.55);"></div>
<div style="left:284.00px;top:29.00px;width:1.00px;height:1.00px;background:#8d9abb;"></div>
<div style="left:285.00px;top:30.00px;width:1.00px;height:1.00px;background:rgba(255,255,255,.55);"></div>
<div style="left:284.00px;top:31.00px;width:1.00px;height:1.00px;background:#8d9abb;"></div>
<div style="left:285.00px;top:32.00px;width:1.00px;height:1.00px;background:rgba(255,255,255,.55);"></div>
<div style="left:284.00px;top:33.00px;width:1.00px;height:1.00px;background:#8d9abb;"></div>
<div style="left:285.00px;top:34.00px;width:1.00px;height:1.00px;background:rgba(255,255,255,.55);"></div>
<svg style="left:288.10px;top:26.10px;" width="8.8" height="8.8" viewBox="0 0 16 16"><g stroke="#1e5f5a" stroke-width="1.200"><path d="M8 1V15M1.500 8H14.500M3 3L13 13M13 3L3 13"/></g><ellipse cx="8" cy="8" rx="4.200" ry="4.700" fill="#20554f"/><ellipse cx="8.500" cy="8.500" rx="2.100" ry="2.600" fill="#8fd45a"/></svg>
<svg style="left:299.90px;top:29.90px;" width="4.2" height="2.3" viewBox="0 0 8 4.4"><path d="M0 0H8L4 4.4Z" fill="#111"/></svg>
<svg style="left:307.60px;top:26.10px;" width="8.8" height="8.8" viewBox="0 0 16 16"><circle cx="8" cy="8" r="7.300" fill="#2f9a3c" stroke="#1f7a2c" stroke-width=".8"/><path d="M6 3.800L12.200 8 6 12.200Z" fill="#fff"/></svg>
<svg style="left:319.40px;top:29.90px;" width="4.2" height="2.3" viewBox="0 0 8 4.4"><path d="M0 0H8L4 4.4Z" fill="#111"/></svg>
<svg style="left:327.10px;top:26.10px;" width="8.8" height="8.8" viewBox="0 0 16 16"><circle cx="7" cy="6.500" r="6" fill="#2f9a3c" stroke="#1f7a2c" stroke-width=".8"/><path d="M5.500 3.300L10.200 6.500 5.500 9.700Z" fill="#fff"/><rect x="8" y="11" width="8" height="4.500" rx=".8" fill="#d3302a"/><rect x="10.500" y="9.500" width="3" height="2" fill="none" stroke="#d3302a"/></svg>
<svg style="left:338.90px;top:29.90px;" width="4.2" height="2.3" viewBox="0 0 8 4.4"><path d="M0 0H8L4 4.4Z" fill="#111"/></svg>
<div style="left:346.00px;top:27.00px;width:1.00px;height:1.00px;background:#8d9abb;"></div>
<div style="left:347.00px;top:28.00px;width:1.00px;height:1.00px;background:rgba(255,255,255,.55);"></div>
<div style="left:346.00px;top:29.00px;width:1.00px;height:1.00px;background:#8d9abb;"></div>
<div style="left:347.00px;top:30.00px;width:1.00px;height:1.00px;background:rgba(255,255,255,.55);"></div>
<div style="left:346.00px;top:31.00px;width:1.00px;height:1.00px;background:#8d9abb;"></div>
<div style="left:347.00px;top:32.00px;width:1.00px;height:1.00px;background:rgba(255,255,255,.55);"></div>
<div style="left:346.00px;top:33.00px;width:1.00px;height:1.00px;background:#8d9abb;"></div>
<div style="left:347.00px;top:34.00px;width:1.00px;height:1.00px;background:rgba(255,255,255,.55);"></div>
<svg style="left:349.10px;top:26.10px;" width="8.8" height="8.8" viewBox="0 0 16 16"><path d="M1 5H6L7.500 6.500H14V14H1Z" fill="#f3b53c" stroke="#c98a1c" stroke-width=".7"/><path d="M1 14L3.500 8.500H16L13.500 14Z" fill="#fad680" stroke="#c98a1c" stroke-width=".7"/><circle cx="9" cy="4" r="3" fill="#6a4fb0"/><circle cx="12.500" cy="5.500" r="3" fill="#3aa04a"/></svg>
<svg style="left:360.90px;top:26.10px;" width="8.8" height="8.8" viewBox="0 0 16 16"><path d="M1 5H6L7.500 6.500H14V14H1Z" fill="#f3b53c" stroke="#c98a1c" stroke-width=".7"/><path d="M1 14L3.500 8.500H16L13.500 14Z" fill="#fad680" stroke="#c98a1c" stroke-width=".7"/><rect x="7" y="3.500" width="7" height="5" fill="#fff" stroke="#9aa3b5" stroke-width=".6"/></svg>
<svg style="left:373.60px;top:26.00px;" width="8.8" height="8.8" viewBox="0 0 16 16"><path d="M13.500 1.500L15 4 6 13 3 14.500 2 13.500 4 10.500Z" fill="#f8dc6a" stroke="#c9a040" stroke-width=".6"/><path d="M10.500 4.500L12.500 7" stroke="#9a8f99" stroke-width="1.500"/><path d="M2 13.500L3 14.500 1 15.500Z" fill="#fff"/></svg>
<svg style="left:385.40px;top:29.90px;" width="4.2" height="2.3" viewBox="0 0 8 4.4"><path d="M0 0H8L4 4.4Z" fill="#111"/></svg>
<div style="left:392.00px;top:27.00px;width:1.00px;height:1.00px;background:#8d9abb;"></div>
<div style="left:393.00px;top:28.00px;width:1.00px;height:1.00px;background:rgba(255,255,255,.55);"></div>
<div style="left:392.00px;top:29.00px;width:1.00px;height:1.00px;background:#8d9abb;"></div>
<div style="left:393.00px;top:30.00px;width:1.00px;height:1.00px;background:rgba(255,255,255,.55);"></div>
<div style="left:392.00px;top:31.00px;width:1.00px;height:1.00px;background:#8d9abb;"></div>
<div style="left:393.00px;top:32.00px;width:1.00px;height:1.00px;background:rgba(255,255,255,.55);"></div>
<div style="left:392.00px;top:33.00px;width:1.00px;height:1.00px;background:#8d9abb;"></div>
<div style="left:393.00px;top:34.00px;width:1.00px;height:1.00px;background:rgba(255,255,255,.55);"></div>
<svg style="left:395.60px;top:26.10px;" width="8.8" height="8.8" viewBox="0 0 16 16"><rect x="6" y="3" width="9" height="12" fill="#f5f5f5" stroke="#c5cad6" stroke-width=".6"/><path d="M3.500 1H7.500V8H10L5.500 13 1 8H3.500Z" fill="#f8cc44" stroke="#c98f1c" stroke-width=".7"/><rect x="4.500" y="13.500" width="2" height="2" fill="#2f6fc0"/></svg>
<svg style="left:407.90px;top:29.90px;" width="4.2" height="2.3" viewBox="0 0 8 4.4"><path d="M0 0H8L4 4.4Z" fill="#111"/></svg>
<svg style="left:415.10px;top:26.10px;" width="8.8" height="8.8" viewBox="0 0 16 16"><rect x="6" y="1" width="9" height="12" fill="#f5f5f5" stroke="#c5cad6" stroke-width=".6"/><path d="M3.500 15H7.500V8H10L5.500 3 1 8H3.500Z" fill="#f8cc44" stroke="#c98f1c" stroke-width=".7"/><rect x="6.500" y="1" width="2" height="2" fill="#2f6fc0"/></svg>
<svg style="left:427.90px;top:29.90px;" width="4.2" height="2.3" viewBox="0 0 8 4.4"><path d="M0 0H8L4 4.4Z" fill="#111"/></svg>
<svg style="left:435.60px;top:26.10px;" width="8.8" height="8.8" viewBox="0 0 16 16"><path d="M1.500 8L7.500 2.500V5.800H14.500V10.200H7.500V13.500Z" fill="#fce28a" stroke="#dd9a18" stroke-width="1.500"/><path d="M2 1l.8 1.500 1.700.3-1.200 1.200.3 1.700L2 5 .4 5.700.7 4 -.5 2.800l1.700-.300z" fill="#3a6fd0"/></svg>
<svg style="left:447.60px;top:26.10px;" width="8.8" height="8.8" viewBox="0 0 16 16"><path d="M1.500 8L7.500 2.500V5.800H14.500V10.200H7.500V13.500Z" fill="#fce28a" stroke="#dd9a18" stroke-width="1.500"/></svg>
<svg style="left:459.40px;top:29.90px;" width="4.2" height="2.3" viewBox="0 0 8 4.4"><path d="M0 0H8L4 4.4Z" fill="#111"/></svg>
<svg style="left:467.30px;top:26.10px;" width="8.8" height="8.8" viewBox="0 0 16 16"><path d="M15 8L8.500 2V5.500H1V10.500H8.500V14Z" fill="#eee9d6" stroke="#e0dac4" stroke-width=".9"/></svg>
<svg style="left:478.90px;top:29.90px;" width="4.2" height="2.3" viewBox="0 0 8 4.4"><path d="M0 0H8L4 4.4Z" fill="#8a8f9a"/></svg>
<div style="left:486.10px;top:26.00px;width:0.80px;height:9.50px;background:#8c98b4;"></div>
<svg style="left:490.60px;top:26.10px;" width="8.8" height="8.8" viewBox="0 0 16 16"><rect x="2" y="6" width="11" height="8" fill="#fbfbfb" stroke="#cfd3dd" stroke-width=".7"/><path d="M9 8L14 2" stroke="#8f9a8f" stroke-width="1.500"/><circle cx="13.500" cy="2.500" r="1.600" fill="#a5b3a0"/></svg>
<svg style="left:1.2px;top:1.2px;" width="8.2" height="8.6" viewBox="0 0 16 16"><rect x="0" y="0" width="16" height="16" fill="#f7e9c9"/><rect x="0" y="0" width="16" height="16" fill="none" stroke="#f2a43a" stroke-width="1.600"/><circle cx="8" cy="8" r="6" fill="#f1c9c4"/><circle cx="8" cy="8.500" r="2" fill="#a8322c"/><circle cx="5" cy="5" r="1.300" fill="#c9524c"/><circle cx="11" cy="5" r="1.300" fill="#c9524c"/><circle cx="4.500" cy="10.500" r="1.200" fill="#d6706a"/><circle cx="11.500" cy="11" r="1.300" fill="#c9524c"/><circle cx="8" cy="3.500" r="1" fill="#d6706a"/><circle cx="8" cy="13" r="1" fill="#e0a080"/></svg>
<div style="left:950.00px;top:5.30px;width:4.40px;height:1.30px;background:#1d3b2e;"></div>
<svg style="left:962.5px;top:2px;" width="7" height="6" viewBox="0 0 14 12"><path d="M4 3V1H13V8H11" fill="none" stroke="#1d3b2e" stroke-width="1.800"/><rect x="1.500" y="4" width="9" height="7" fill="none" stroke="#1d3b2e" stroke-width="2"/></svg>
<svg style="left:982.4px;top:2.2px;" width="5" height="5" viewBox="0 0 10 10"><path d="M1 1L9 9M9 1L1 9" stroke="#fff" stroke-width="2.200"/></svg>
<div style="left:827.50px;top:25.20px;width:71.30px;height:10.00px;background:#fff;border:0.6px solid #8fa8dc;"></div>
<span style="left:829.80px;top:28px;font-size:6.3px;line-height:8.19px;color:#4a4a4a;letter-spacing:-0.168px;text-shadow:none;">Quick Access</span>
<div style="left:900.00px;top:26.00px;width:1.00px;height:1.00px;background:#6f86b8;"></div>
<div style="left:901.00px;top:27.00px;width:1.00px;height:1.00px;background:rgba(255,255,255,.55);"></div>
<div style="left:900.00px;top:28.00px;width:1.00px;height:1.00px;background:#6f86b8;"></div>
<div style="left:901.00px;top:29.00px;width:1.00px;height:1.00px;background:rgba(255,255,255,.55);"></div>
<div style="left:900.00px;top:30.00px;width:1.00px;height:1.00px;background:#6f86b8;"></div>
<div style="left:901.00px;top:31.00px;width:1.00px;height:1.00px;background:rgba(255,255,255,.55);"></div>
<div style="left:900.00px;top:32.00px;width:1.00px;height:1.00px;background:#6f86b8;"></div>
<div style="left:901.00px;top:33.00px;width:1.00px;height:1.00px;background:rgba(255,255,255,.55);"></div>
<div style="left:900.00px;top:34.00px;width:1.00px;height:1.00px;background:#6f86b8;"></div>
<div style="left:901.00px;top:35.00px;width:1.00px;height:1.00px;background:rgba(255,255,255,.55);"></div>
<div style="left:903.40px;top:23.80px;width:1.00px;height:14.00px;background:#7f9fd9;"></div>
<svg style="left:909.60px;top:26.30px;" width="8.8" height="8.8" viewBox="0 0 16 16"><rect x="2" y="4.500" width="11" height="10" fill="#fff" stroke="#7a86a3"/><rect x="2.500" y="5" width="10" height="2.500" fill="#4f7fc8"/><rect x="4" y="9" width="4" height="4" fill="#e9e2c2"/><path d="M12.500 .5l1 2.200 2.300.3-1.700 1.600.4 2.300-2-1.100-2 1.100.4-2.300L9.200 3l2.300-.300z" fill="#f8d257" stroke="#d9a21b" stroke-width=".6"/></svg>
<div style="left:920.90px;top:26.00px;width:0.80px;height:9.50px;background:#a9a598;"></div>
<svg style="left:925.00px;top:26.30px;" width="8.8" height="8.8" viewBox="0 0 16 16"><rect x="1.500" y="2" width="10" height="9" fill="#fff" stroke="#5a6fa8"/><rect x="2" y="2.500" width="9" height="2" fill="#4f7fc8"/><rect x="6" y="7" width="8.500" height="8" fill="#eef2fb" stroke="#5a6fa8"/><path d="M12 9.500a2.500 2.500 0 1 0 0 4" fill="none" stroke="#2f55b0" stroke-width="1.400"/></svg>
<span class="d" style="left:936.00px;top:28px;font-size:6.3px;line-height:8.19px;color:#111;letter-spacing:0.038px;">C/C++</span>
<div style="left:959.20px;top:25.10px;width:34.60px;height:11.70px;background:#b7d5f7;border:0.6px solid #8dbaf0;"></div>
<svg style="left:961.60px;top:26.20px;" width="8.8" height="8.8" viewBox="0 0 16 16"><g stroke="#1e5f5a" stroke-width="1.200"><path d="M8 1V15M1.500 8H14.500M3 3L13 13M13 3L3 13"/></g><ellipse cx="8" cy="8" rx="4.200" ry="4.700" fill="#20554f"/><ellipse cx="8.500" cy="8.500" rx="2.100" ry="2.600" fill="#8fd45a"/></svg>
<span class="d" style="left:972.00px;top:28px;font-size:6.3px;line-height:8.19px;color:#111;letter-spacing:-0.153px;">Debug</span>
<svg style="left:5.00px;top:44.30px;" width="8.8" height="8.8" viewBox="0 0 16 16"><path d="M3 1.500H10L13 4.500V14.500H3Z" fill="#fff" stroke="#caa766" stroke-width="1.100"/><path d="M6 5.500V12.500M6 9.500a2 2 0 0 1 4 0V12.500" fill="none" stroke="#2f55b0" stroke-width="1.600"/></svg>
<svg style="left:70.30px;top:44.30px;" width="8.8" height="8.8" viewBox="0 0 16 16"><path d="M3 1.500H10L13 4.500V14.500H3Z" fill="#fff" stroke="#caa766" stroke-width="1.100"/><path d="M10.500 8.300a2.600 2.600 0 1 0 0 3.400" fill="none" stroke="#2f55b0" stroke-width="1.700"/></svg>
<svg style="left:136.60px;top:44.30px;" width="8.8" height="8.8" viewBox="0 0 16 16"><path d="M3 1.500H10L13 4.500V14.500H3Z" fill="#fff" stroke="#caa766" stroke-width="1.100"/><path d="M10.500 8.300a2.600 2.600 0 1 0 0 3.400" fill="none" stroke="#2f55b0" stroke-width="1.700"/><rect x="0" y="0" width="7" height="5.500" rx="1" fill="#f5d35a" stroke="#c99a1c" stroke-width=".7"/></svg>
<svg style="left:196.90px;top:44.30px;" width="8.8" height="8.8" viewBox="0 0 16 16"><path d="M3 1.500H10L13 4.500V14.500H3Z" fill="#fff" stroke="#caa766" stroke-width="1.100"/><path d="M6 5.500V12.500M6 9.500a2 2 0 0 1 4 0V12.500" fill="none" stroke="#2f55b0" stroke-width="1.600"/><rect x="0" y="0" width="7" height="5.500" rx="1" fill="#f5d35a" stroke="#c99a1c" stroke-width=".7"/></svg>
<svg style="left:125.40px;top:46.00px;" width="5.2" height="5.2" viewBox="0 0 10 10"><path d="M1.500 1.500L8.500 8.500M8.500 1.500L1.500 8.500" stroke="#777" stroke-width="1.500"/><rect x="4" y="0" width="2" height="1.500" fill="#fff"/><rect x="4" y="8.500" width="2" height="1.500" fill="#fff"/><rect x="0" y="4" width="1.500" height="2" fill="#fff"/><rect x="8.500" y="4" width="1.500" height="2" fill="#fff"/></svg>
<svg style="left:630.10px;top:44.90px;" width="6.4" height="2.800" viewBox="0 0 12.800 5.600"><rect x="1" y="1" width="10.800" height="3.600" rx="1.500" fill="#fff" stroke="#6c7590" stroke-width="1.300"/></svg>
<svg style="left:642.30px;top:44.90px;" width="6.4" height="6" viewBox="0 0 12.800 12"><rect x="1" y="1" width="10.800" height="10" rx="1" fill="#fff" stroke="#6c7590" stroke-width="1.300"/><rect x="1" y="1" width="10.800" height="2.200" fill="#6c7590"/></svg>
<svg style="left:639.40px;top:57.70px;" width="5.2" height="5.2" viewBox="0 0 10 10"><path d="M1.500 7L5 3.200 8.500 7" fill="none" stroke="#222" stroke-width="1.800" transform="rotate(0 5 5)"/></svg>
<svg style="left:639.40px;top:415.40px;" width="5.2" height="5.2" viewBox="0 0 10 10"><path d="M1.500 7L5 3.200 8.500 7" fill="none" stroke="#111" stroke-width="1.800" transform="rotate(180 5 5)"/></svg>
<svg style="left:24.00px;top:425.00px;" width="4" height="4" viewBox="0 0 10 10"><path d="M1.500 7L5 3.200 8.500 7" fill="none" stroke="#8a8a8a" stroke-width="1.800" transform="rotate(270 5 5)"/></svg>
<svg style="left:631.50px;top:425.00px;" width="4" height="4" viewBox="0 0 10 10"><path d="M1.500 7L5 3.200 8.500 7" fill="none" stroke="#8a8a8a" stroke-width="1.800" transform="rotate(90 5 5)"/></svg>
<div style="left:648.00px;top:58.20px;width:4.20px;height:4.20px;background:#f6c21a;border:0.5px solid #e9d9a0;"></div>
<div style="left:647.30px;top:64.30px;width:6.00px;height:0.60px;background:#b8b8b8;"></div>
<div style="left:647.50px;top:92.80px;width:4.60px;height:5.80px;background:#fbe9a8;border:0.7px solid #f0c84a;border-radius:1px;"></div>
<div style="left:648.30px;top:95.40px;width:3.00px;height:0.70px;background:#f0c84a;"></div>
<div style="left:647.70px;top:349.40px;width:4.20px;height:2.40px;background:#fdf3cf;border:0.6px solid #f0cf6a;border-radius:1px;"></div>
<div style="left:647.70px;top:367.60px;width:4.20px;height:2.40px;background:#fafafa;border:0.6px solid #e3e3e3;border-radius:1px;"></div>
<div style="left:647.70px;top:386.00px;width:4.20px;height:2.40px;background:#fafafa;border:0.6px solid #e3e3e3;border-radius:1px;"></div>
<div style="left:647.70px;top:404.40px;width:4.20px;height:2.40px;background:#fafafa;border:0.6px solid #e3e3e3;border-radius:1px;"></div>
<svg style="left:5.80px;top:204.60px;" width="7" height="7" viewBox="0 0 16 16"><path d="M8 1.500L15 14.500H1Z" fill="#f6c544" stroke="#c78a1a" stroke-width="1.200"/><rect x="7.200" y="5.500" width="1.600" height="5" fill="#5a3a0a"/><rect x="7.200" y="11.500" width="1.600" height="1.600" fill="#5a3a0a"/></svg>
<div style="left:647.70px;top:142.30px;width:4.20px;height:2.40px;background:#fdf3cf;border:0.6px solid #f0cf6a;border-radius:1px;"></div>
<svg style="left:664.60px;top:44.20px;" width="8.8" height="8.8" viewBox="0 0 16 16"><path d="M3 3.500Q1 8 3 12.500M8.500 3.500Q10.500 8 8.500 12.500" fill="none" stroke="#7d8aa8" stroke-width="1.300"/><path d="M4.200 6L7.300 10M7.300 6L4.200 10" stroke="#7d8aa8" stroke-width="1.200"/><path d="M11 7H15M11 9.500H15" stroke="#7d8aa8" stroke-width="1.100"/></svg>
<svg style="left:706.10px;top:44.60px;" width="8.8" height="8.8" viewBox="0 0 16 16"><circle cx="5" cy="5.500" r="3" fill="#4f8fc8" stroke="#2f66a8" stroke-width=".9"/><circle cx="11.500" cy="10.500" r="3" fill="#4f8fc8" stroke="#2f66a8" stroke-width=".9"/><circle cx="4.500" cy="5" r="1" fill="#b9d9ef"/><circle cx="11" cy="10" r="1" fill="#b9d9ef"/></svg>
<svg style="left:753.40px;top:46.00px;" width="5.2" height="5.2" viewBox="0 0 10 10"><path d="M1.500 1.500L8.500 8.500M8.500 1.500L1.500 8.500" stroke="#888" stroke-width="1.500"/><rect x="4" y="0" width="2" height="1.500" fill="#fff"/><rect x="4" y="8.500" width="2" height="1.500" fill="#fff"/><rect x="0" y="4" width="1.500" height="2" fill="#fff"/><rect x="8.500" y="4" width="1.500" height="2" fill="#fff"/></svg>
<svg style="left:765.10px;top:44.20px;" width="8.8" height="8.8" viewBox="0 0 16 16"><g fill="#5f7fc0"><rect x="1" y="2.500" width="2" height="11"/><rect x="5" y="2.500" width="2" height="11"/><rect x="9" y="2.500" width="2" height="11"/><rect x="13" y="2.500" width="2" height="11"/></g><g fill="#fff"><rect x="0" y="5" width="16" height=".9"/><rect x="0" y="8" width="16" height=".9"/><rect x="0" y="11" width="16" height=".9"/></g></svg>
<svg style="left:807.60px;top:44.20px;" width="8.8" height="8.8" viewBox="0 0 16 16"><rect x="1" y="4" width="9" height="2" fill="#5aa85a"/><rect x="1" y="7" width="9" height="2" fill="#4f7fc8"/><rect x="1" y="10" width="10" height="2" fill="#e59a5a"/><rect x="1" y="13" width="10" height="1.500" fill="#c9b27a"/><path d="M9 13L12 3 15 13" fill="none" stroke="#e9b93a" stroke-width="1.800"/></svg>
<svg style="left:846.60px;top:44.20px;" width="8.8" height="8.8" viewBox="0 0 16 16"><path d="M5 3H12L14.500 5.500V15H5Z" fill="#fff" stroke="#d9bf8f" stroke-width="1"/><circle cx="5.500" cy="5.500" r="4.500" fill="#e8534f" stroke="#c9302c" stroke-width=".7"/><path d="M3.800 3.800L7.200 7.200M7.200 3.800L3.800 7.200" stroke="#fff" stroke-width="1.300"/></svg>
<svg style="left:888.10px;top:44.20px;" width="8.8" height="8.8" viewBox="0 0 16 16"><rect x="1" y="1" width="5" height="4" fill="#dceafa" stroke="#6aa0dc"/><rect x="1" y="6.500" width="5" height="3.500" fill="#dceafa" stroke="#6aa0dc"/><rect x="1" y="11.500" width="5" height="3.500" fill="#dceafa" stroke="#6aa0dc"/><path d="M8 3H13M8 8.200H14M8 13.200H13" stroke="#6aa0dc" stroke-width="1.300"/></svg>
<svg style="left:969.80px;top:45.00px;" width="6.4" height="2.800" viewBox="0 0 12.800 5.600"><rect x="1" y="1" width="10.800" height="3.600" rx="1.500" fill="#fff" stroke="#8a8a8a" stroke-width="1.300"/></svg>
<svg style="left:981.60px;top:45.00px;" width="6.4" height="6" viewBox="0 0 12.800 12"><rect x="1" y="1" width="10.800" height="10" rx="1" fill="#fff" stroke="#8a8a8a" stroke-width="1.300"/><rect x="1" y="1" width="10.800" height="2.200" fill="#8a8a8a"/></svg>
<svg style="left:880.80px;top:58.60px;" width="6.4" height="6.4" viewBox="0 0 10 10"><path d="M1.500 1.500L8.500 8.500M8.500 1.500L1.500 8.500" stroke="#555" stroke-width="2.900"/></svg>
<svg style="left:892.20px;top:57.90px;" width="5" height="5" viewBox="0 0 10 10"><path d="M1.500 1.500L8.500 8.500M8.500 1.500L1.500 8.500" stroke="#777" stroke-width="2.900"/></svg>
<svg style="left:894.20px;top:59.80px;" width="5.6" height="5.6" viewBox="0 0 10 10"><path d="M1.500 1.500L8.500 8.500M8.500 1.500L1.500 8.500" stroke="#555" stroke-width="2.900"/></svg>
<svg style="left:903.10px;top:57.20px;" width="8.8" height="8.8" viewBox="0 0 16 16"><circle cx="5" cy="9" r="4" fill="#c98f3a" stroke="#8a5a1a" stroke-width=".8"/><circle cx="10.500" cy="5.500" r="4" fill="#d9a04a" stroke="#8a5a1a" stroke-width=".8"/><circle cx="5" cy="9" r="1.500" fill="#f0d090"/><circle cx="10.500" cy="5.500" r="1.500" fill="#f0d090"/><path d="M10 12.500a4 4 0 0 0 4-3" fill="none" stroke="#2f6fc8" stroke-width="1.500"/><path d="M2 4a4 4 0 0 1 3-3" fill="none" stroke="#2f6fc8" stroke-width="1.500"/></svg>
<svg style="left:915.30px;top:57.20px;" width="8.8" height="8.8" viewBox="0 0 16 16"><rect x="7" y="2" width="8" height="12" fill="#e9eef8" stroke="#b0b9cc" stroke-width=".8"/><rect x="9" y="5" width="4" height="6" fill="#c5d3ea"/><path d="M1 8L6 3.500V6H11V10H6V12.500Z" fill="#f9cf48" stroke="#d19a1e" stroke-width=".8"/></svg>
<svg style="left:927.10px;top:57.20px;" width="8.8" height="8.8" viewBox="0 0 16 16"><circle cx="8.500" cy="8.500" r="3.300" fill="#5d9fd0" stroke="#3a74b4"/><path d="M2 2L14.500 14.500" stroke="#2f4db0" stroke-width="1.800"/></svg>
<div style="left:938.40px;top:57.30px;width:0.80px;height:8.50px;background:#b9b9b9;"></div>
<svg style="left:943.60px;top:57.20px;" width="8.8" height="8.8" viewBox="0 0 16 16"><rect x="2" y="2.500" width="12" height="11.500" rx="1" fill="#f2f6fc" stroke="#7f9fd0" stroke-width="1.200"/><rect x="2" y="2.500" width="12" height="2" fill="#c9d9f0"/><path d="M5 9H11M8 6V12" stroke="#2f4fa8" stroke-width="1.500"/></svg>
<svg style="left:955.40px;top:57.20px;" width="8.8" height="8.8" viewBox="0 0 16 16"><rect x="2" y="2.500" width="12" height="11.500" rx="1" fill="#f2f6fc" stroke="#7f9fd0" stroke-width="1.200"/><rect x="2" y="2.500" width="12" height="2" fill="#c9d9f0"/><path d="M5 9H11" stroke="#2f4fa8" stroke-width="1.500"/></svg>
<svg style="left:966.90px;top:57.00px;" width="8.8" height="8.8" viewBox="0 0 16 16"><g transform="translate(5.500,5)"><path d="M0 -4L1.200 -1.200 4 0 1.200 1.200 0 4 -1.200 1.200 -4 0 -1.200 -1.200Z" fill="#f8d257" stroke="#c9921a" stroke-width="1"/></g><g transform="translate(11,11)"><path d="M0 -4L1.200 -1.200 4 0 1.200 1.200 0 4 -1.200 1.200 -4 0 -1.200 -1.200Z" fill="#f8d257" stroke="#c9921a" stroke-width="1"/></g><path d="M7 6.500L9.500 9.500" stroke="#c9921a" stroke-width="1.200"/></svg>
<svg style="left:983.70px;top:57.90px;" width="5.600" height="3.200" viewBox="0 0 11 6.400"><path d="M1 1H10L5.500 5.500Z" fill="#fff" stroke="#777" stroke-width="1.100"/></svg>
<div style="left:678.00px;top:69.00px;width:7.00px;height:7.00px;background:#fff;border:1px solid #8c8c8c;"></div>
<svg style="left:679.10px;top:70.10px;" width="5" height="4.600" viewBox="0 0 10 9.200"><path d="M1.500 4.500L4 7.500 8.500 1.500" fill="none" stroke="#000" stroke-width="2.300"/></svg>
<div style="left:678.00px;top:78.00px;width:7.00px;height:7.00px;background:#fff;border:1px solid #8c8c8c;"></div>
<svg style="left:679.10px;top:79.20px;" width="5" height="4.600" viewBox="0 0 10 9.200"><path d="M1.500 4.500L4 7.500 8.500 1.500" fill="none" stroke="#000" stroke-width="2.300"/></svg>
<svg style="left:687.60px;top:68.40px;" width="8.8" height="8.8" viewBox="0 0 16 16"><circle cx="8" cy="9.500" r="3.500" fill="#5596cc" stroke="#3f7db8" stroke-width=".9"/><path d="M5.500 9.500H10.500" stroke="#a9d0ea" stroke-width="1.200"/><path d="M7 2H12V.5L15.500 2.800 12 5V3.500H7Z" fill="#2f9a4a"/></svg>
<svg style="left:687.60px;top:77.40px;" width="8.8" height="8.8" viewBox="0 0 16 16"><circle cx="8" cy="9.500" r="3.500" fill="#5596cc" stroke="#3f7db8" stroke-width=".9"/><path d="M5.500 9.500H10.500" stroke="#a9d0ea" stroke-width="1.200"/></svg>
<svg style="left:664.60px;top:314.20px;" width="8.8" height="8.8" viewBox="0 0 16 16"><g stroke="#1e5f5a" stroke-width="1.200"><path d="M8 1V15M1.500 8H14.500M3 3L13 13M13 3L3 13"/></g><ellipse cx="8" cy="8" rx="4.200" ry="4.700" fill="#20554f"/><ellipse cx="8.500" cy="8.500" rx="2.100" ry="2.600" fill="#8fd45a"/></svg>
<svg style="left:698.40px;top:316.40px;" width="5.2" height="5.2" viewBox="0 0 10 10"><path d="M1.500 1.500L8.500 8.500M8.500 1.500L1.500 8.500" stroke="#888" stroke-width="1.500"/><rect x="4" y="0" width="2" height="1.500" fill="#fff"/><rect x="4" y="8.500" width="2" height="1.500" fill="#fff"/><rect x="0" y="4" width="1.500" height="2" fill="#fff"/><rect x="8.500" y="4" width="1.500" height="2" fill="#fff"/></svg>
<svg style="left:959.70px;top:314.70px;" width="5.600" height="3.200" viewBox="0 0 11 6.400"><path d="M1 1H10L5.500 5.500Z" fill="#fff" stroke="#777" stroke-width="1.100"/></svg>
<svg style="left:969.80px;top:315.40px;" width="6.4" height="2.800" viewBox="0 0 12.800 5.600"><rect x="1" y="1" width="10.800" height="3.600" rx="1.500" fill="#fff" stroke="#8a8a8a" stroke-width="1.300"/></svg>
<svg style="left:981.60px;top:315.40px;" width="6.4" height="6" viewBox="0 0 12.800 12"><rect x="1" y="1" width="10.800" height="10" rx="1" fill="#fff" stroke="#8a8a8a" stroke-width="1.300"/><rect x="1" y="1" width="10.800" height="2.200" fill="#8a8a8a"/></svg>
<svg style="left:916.20px;top:314.60px;" width="5" height="5" viewBox="0 0 10 10"><path d="M1.500 1.500L8.500 8.500M8.500 1.500L1.500 8.500" stroke="#777" stroke-width="2.900"/></svg>
<svg style="left:918.20px;top:316.50px;" width="5.6" height="5.6" viewBox="0 0 10 10"><path d="M1.500 1.500L8.500 8.500M8.500 1.500L1.500 8.500" stroke="#555" stroke-width="2.900"/></svg>
<svg style="left:927.10px;top:313.90px;" width="8.8" height="8.8" viewBox="0 0 16 16"><path d="M3 13V6M6 13V9M3 6H8M10 4L13 7M13 4L10 7" stroke="#c9c9c9" stroke-width="1.500" fill="none"/><rect x="8" y="9" width="5" height="4" fill="#e3e3e3"/></svg>
<div style="left:938.40px;top:314.00px;width:0.80px;height:8.80px;background:#cfcfcf;"></div>
<svg style="left:942.60px;top:313.90px;" width="8.8" height="8.8" viewBox="0 0 16 16"><rect x="2.500" y="6" width="2.600" height="7.500" fill="#1f2fb8"/><rect x="1.500" y="12.500" width="4.600" height="1.500" fill="#1f2fb8"/><rect x="1.500" y="6" width="2.500" height="1.400" fill="#1f2fb8"/><circle cx="3.800" cy="3" r="1.600" fill="#1f2fb8"/><path d="M7 8H11V5.500L15.500 9 11 12.500V10H7Z" fill="#f2c12e" stroke="#c98f1c" stroke-width=".6"/></svg>
<svg style="left:670.3px;top:330.3px;" width="3.600" height="3.600" viewBox="0 0 6 6"><path d="M6 0V6H0Z" fill="#222"/></svg>
<svg style="left:677.40px;top:326.40px;" width="8.8" height="8.8" viewBox="0 0 16 16"><rect x="1" y="1.500" width="14" height="13" rx="1" fill="#fffdf5" stroke="#c9a86a" stroke-width="1.200"/><rect x="1.500" y="2" width="13" height="3" fill="#4f8fd8"/><path d="M10.500 8a2.600 2.600 0 1 0 0 3.600" fill="none" stroke="#2f55b0" stroke-width="1.700"/></svg>
<svg style="left:686.60px;top:335.80px;" width="8.8" height="8.8" viewBox="0 0 16 16"><rect x="7.500" y="1" width="6" height="14" fill="#c9ccd3" stroke="#8f949f" stroke-width=".8"/><rect x="9" y="3" width="2" height="1.500" fill="#e84a5a"/><rect x="9.500" y="9" width="3" height="5" fill="#9fb0d8"/><rect x="1" y="9" width="3.300" height="3" fill="#e03a3a"/><rect x="4.800" y="9" width="3" height="3" fill="#e03a3a"/><rect x="1" y="12.500" width="3.300" height="3" fill="#e03a3a"/><rect x="4.800" y="12.500" width="3" height="3" fill="#e03a3a"/></svg>
<svg style="left:686.60px;top:345.10px;" width="8.8" height="8.8" viewBox="0 0 16 16"><rect x="7.500" y="1" width="6" height="14" fill="#c9ccd3" stroke="#8f949f" stroke-width=".8"/><rect x="9" y="3" width="2" height="1.500" fill="#e84a5a"/><rect x="9.500" y="9" width="3" height="5" fill="#9fb0d8"/><rect x="1" y="9" width="3.300" height="3" fill="#e03a3a"/><rect x="4.800" y="9" width="3" height="3" fill="#e03a3a"/><rect x="1" y="12.500" width="3.300" height="3" fill="#e03a3a"/><rect x="4.800" y="12.500" width="3" height="3" fill="#e03a3a"/></svg>
<svg style="left:686.60px;top:354.50px;" width="8.8" height="8.8" viewBox="0 0 16 16"><rect x="7.500" y="1" width="6" height="14" fill="#c9ccd3" stroke="#8f949f" stroke-width=".8"/><rect x="9" y="3" width="2" height="1.500" fill="#e84a5a"/><rect x="9.500" y="9" width="3" height="5" fill="#9fb0d8"/><rect x="1" y="9" width="3.300" height="3" fill="#e03a3a"/><rect x="4.800" y="9" width="3" height="3" fill="#e03a3a"/><rect x="1" y="12.500" width="3.300" height="3" fill="#e03a3a"/><rect x="4.800" y="12.500" width="3" height="3" fill="#e03a3a"/></svg>
<svg style="left:5.10px;top:441.90px;" width="8.8" height="8.8" viewBox="0 0 16 16"><rect x="1.500" y="1.500" width="13" height="10.500" rx="1.500" fill="#dfe8f8" stroke="#3a5aa8" stroke-width="1.800"/><rect x="4" y="4" width="5" height="1.300" fill="#3a5aa8"/><rect x="4" y="6.500" width="7" height="1.300" fill="#7f98cf"/><rect x="4.500" y="13" width="7" height="2" fill="#3a5aa8"/></svg>
<svg style="left:43.20px;top:444.20px;" width="5.2" height="5.2" viewBox="0 0 10 10"><path d="M1.500 1.500L8.500 8.500M8.500 1.500L1.500 8.500" stroke="#888" stroke-width="1.500"/><rect x="4" y="0" width="2" height="1.500" fill="#fff"/><rect x="4" y="8.500" width="2" height="1.500" fill="#fff"/><rect x="0" y="4" width="1.500" height="2" fill="#fff"/><rect x="8.500" y="4" width="1.500" height="2" fill="#fff"/></svg>
<svg style="left:55.60px;top:442.10px;" width="8.8" height="8.8" viewBox="0 0 16 16"><rect x="3" y="2.500" width="10" height="12" fill="#fff" stroke="#d9c9a8" stroke-width="1"/><rect x="5.500" y="1" width="5" height="2.500" fill="#d9d3c3"/><path d="M3 9L6 12.500 12 4.500" fill="none" stroke="#7aa7e0" stroke-width="1.800"/></svg>
<svg style="left:85.90px;top:442.10px;" width="8.8" height="8.8" viewBox="0 0 16 16"><rect x="4" y="1.500" width="9" height="12" fill="#fff" stroke="#d8d3c6" stroke-width="1"/><circle cx="7.500" cy="5" r="2.300" fill="#f08a8a"/><path d="M4 10L7 15.500H1Z" fill="#f5d88a" stroke="#e0b95a" stroke-width=".6"/></svg>
<svg style="left:129.10px;top:442.10px;" width="8.8" height="8.8" viewBox="0 0 16 16"><circle cx="8" cy="8" r="6.300" fill="#8fbbe8" stroke="#6a9fd8" stroke-width="1"/><path d="M6 4.500L11.500 8 6 11.500Z" fill="#fff"/></svg>
<svg style="left:179.10px;top:442.10px;" width="8.8" height="8.8" viewBox="0 0 16 16"><rect x="5" y="1.500" width="6.500" height="13" rx="1" fill="#dbe6f8" stroke="#7f9fd8" stroke-width="1.300"/></svg>
<svg style="left:217.60px;top:441.90px;" width="8.8" height="8.8" viewBox="0 0 16 16"><rect x="1" y="1" width="2.500" height="2.500" fill="#5a6fd0"/><path d="M6 5V14M6 9H10M10 6V13M12 13H15" stroke="#a9b0c0" stroke-width="1.300" fill="none"/></svg>
<svg style="left:277.60px;top:442.10px;" width="8.8" height="8.8" viewBox="0 0 16 16"><path d="M3 3.500Q1 8 3 12.500M8.500 3.500Q10.500 8 8.500 12.500" fill="none" stroke="#7d8aa8" stroke-width="1.300"/><path d="M4.200 6L7.300 10M7.300 6L4.200 10" stroke="#7d8aa8" stroke-width="1.200"/><path d="M11 7H15M11 9.500H15" stroke="#7d8aa8" stroke-width="1.100"/></svg>
<svg style="left:825.60px;top:441.60px;" width="8.8" height="8.8" viewBox="0 0 16 16"><rect x="3.500" y="3.500" width="9.500" height="9.500" fill="#cdb3b9" stroke="#dccbd0" stroke-width="1"/></svg>
<svg style="left:838.50px;top:442.80px;" width="6.4" height="6.4" viewBox="0 0 10 10"><path d="M1.500 1.500L8.500 8.500M8.500 1.500L1.500 8.500" stroke="#555" stroke-width="2.900"/></svg>
<svg style="left:850.20px;top:442.10px;" width="5" height="5" viewBox="0 0 10 10"><path d="M1.500 1.500L8.500 8.500M8.500 1.500L1.500 8.500" stroke="#777" stroke-width="2.900"/></svg>
<svg style="left:852.20px;top:444.00px;" width="5.6" height="5.6" viewBox="0 0 10 10"><path d="M1.500 1.500L8.500 8.500M8.500 1.500L1.500 8.500" stroke="#555" stroke-width="2.900"/></svg>
<div style="left:860.80px;top:441.50px;width:0.80px;height:9.00px;background:#cfcfcf;"></div>
<svg style="left:865.40px;top:441.60px;" width="8.8" height="8.8" viewBox="0 0 16 16"><path d="M2 1H7.500L10 3.500V13H2Z" fill="#f4f7fc" stroke="#c9b27a" stroke-width=".9"/><rect x="3.500" y="4" width="3" height="8" fill="#b9cdea"/><path d="M9 9L15 15M15 9L9 15" stroke="#3a3a3a" stroke-width="2.200"/></svg>
<svg style="left:877.40px;top:441.60px;" width="8.8" height="8.8" viewBox="0 0 16 16"><rect x="1" y="2" width="14" height="12" fill="#fdf6dc" stroke="#d9b24a" stroke-width="1.200"/><rect x="11" y="3" width="3" height="10" fill="#5a7fc8"/><rect x="2.500" y="8.500" width="6.500" height="5" fill="#e9b93a" stroke="#a9801a" stroke-width=".6"/><path d="M4 8.500V7a1.800 1.800 0 0 1 3.600 0V8.500" fill="none" stroke="#a9801a" stroke-width="1"/></svg>
<div style="left:887.70px;top:440.20px;width:12.10px;height:11.40px;background:#a9cdf8;border:0.6px solid #6aa5ee;"></div>
<div style="left:899.70px;top:440.20px;width:12.30px;height:11.40px;background:#a9cdf8;border:0.6px solid #6aa5ee;"></div>
<svg style="left:889.40px;top:441.60px;" width="8.8" height="8.8" viewBox="0 0 16 16"><rect x="5" y="2" width="10" height="7" fill="#eef4fd" stroke="#6f8fc8" stroke-width=".9"/><path d="M4.500 7.500a3 3 0 1 0 3 3" fill="none" stroke="#3a5aa8" stroke-width="1.300"/><path d="M7 13.500L13 10" stroke="#9aa3b5" stroke-width="1"/><rect x="8" y="4" width="4" height="1.500" fill="#8fa5d0"/></svg>
<svg style="left:901.50px;top:441.60px;" width="8.8" height="8.8" viewBox="0 0 16 16"><rect x="5" y="2" width="10" height="7" fill="#eef4fd" stroke="#6f8fc8" stroke-width=".9"/><path d="M4.500 7.500a3 3 0 1 0 3 3" fill="none" stroke="#3a5aa8" stroke-width="1.300"/><path d="M7 13.500L13 10" stroke="#9aa3b5" stroke-width="1"/><rect x="7.500" y="3.500" width="5.500" height="3.500" fill="#e84a4a"/></svg>
<div style="left:913.10px;top:441.50px;width:0.80px;height:9.00px;background:#cfcfcf;"></div>
<svg style="left:917.60px;top:441.60px;" width="8.8" height="8.8" viewBox="0 0 16 16"><rect x="1.500" y="6" width="11" height="8.500" fill="#fff" stroke="#9fb3dc" stroke-width="1"/><rect x="2" y="6.500" width="10" height="2.500" fill="#5a8fd8"/><path d="M8.500 8.500L13 3" stroke="#2a7a3a" stroke-width="1.600"/><circle cx="13" cy="3" r="2.200" fill="#3aa04a"/></svg>
<svg style="left:930.10px;top:441.20px;" width="8.8" height="8.8" viewBox="0 0 16 16"><rect x="1.500" y="1.500" width="13" height="10.500" rx="1.500" fill="#dfe8f8" stroke="#3a5aa8" stroke-width="1.800"/><rect x="4" y="4" width="5" height="1.300" fill="#3a5aa8"/><rect x="4" y="6.500" width="7" height="1.300" fill="#7f98cf"/><rect x="4.500" y="13" width="7" height="2" fill="#3a5aa8"/></svg>
<svg style="left:941.60px;top:444.90px;" width="4.2" height="2.3" viewBox="0 0 8 4.4"><path d="M0 0H8L4 4.4Z" fill="#111"/></svg>
<svg style="left:949.60px;top:441.60px;" width="8.8" height="8.8" viewBox="0 0 16 16"><rect x="1.500" y="4" width="11.500" height="10.500" fill="#fff" stroke="#9fb3dc"/><rect x="2" y="4.500" width="10.500" height="2.500" fill="#4f7fc8"/><rect x="3" y="10" width="8" height="3.500" fill="#f6e6b4"/><path d="M12.500 .5l1.200 2.300 2.500.4-1.800 1.800.4 2.500-2.300-1.200-2.300 1.200.4-2.500L8.800 3.200l2.500-.400z" fill="#f8d257" stroke="#d9a21b" stroke-width=".6"/></svg>
<svg style="left:961.30px;top:444.90px;" width="4.2" height="2.3" viewBox="0 0 8 4.4"><path d="M0 0H8L4 4.4Z" fill="#111"/></svg>
<svg style="left:969.80px;top:443.10px;" width="6.4" height="2.800" viewBox="0 0 12.800 5.600"><rect x="1" y="1" width="10.800" height="3.600" rx="1.500" fill="#fff" stroke="#8a8a8a" stroke-width="1.300"/></svg>
<svg style="left:981.70px;top:443.10px;" width="6.4" height="6" viewBox="0 0 12.800 12"><rect x="1" y="1" width="10.800" height="10" rx="1" fill="#fff" stroke="#8a8a8a" stroke-width="1.300"/><rect x="1" y="1" width="10.800" height="2.200" fill="#8a8a8a"/></svg>
<svg style="left:985.60px;top:465.40px;" width="4.2" height="4.2" viewBox="0 0 10 10"><path d="M1.500 7L5 3.200 8.500 7" fill="none" stroke="#8a8a8a" stroke-width="1.800" transform="rotate(0 5 5)"/></svg>
<svg style="left:985.60px;top:503.90px;" width="4.2" height="4.2" viewBox="0 0 10 10"><path d="M1.500 7L5 3.200 8.500 7" fill="none" stroke="#8a8a8a" stroke-width="1.800" transform="rotate(180 5 5)"/></svg>
<svg style="left:8.40px;top:514.00px;" width="4" height="4" viewBox="0 0 10 10"><path d="M1.500 7L5 3.200 8.500 7" fill="none" stroke="#8a8a8a" stroke-width="1.800" transform="rotate(270 5 5)"/></svg>
<svg style="left:976.50px;top:514.00px;" width="4" height="4" viewBox="0 0 10 10"><path d="M1.500 7L5 3.200 8.500 7" fill="none" stroke="#8a8a8a" stroke-width="1.800" transform="rotate(90 5 5)"/></svg>
<svg style="left:5.5px;top:543.6px;" width="13" height="12" viewBox="0 0 26 24"><path d="M0 3.500L10.500 2V11.500H0ZM12 1.800L26 0V11.500H12ZM0 13H10.500V22.500L0 21ZM12 13H26V24L12 22.200Z" fill="#fff"/></svg>
<svg style="left:34.00px;top:541.20px;" width="17" height="17" viewBox="0 0 32 32"><circle cx="16" cy="16" r="13" fill="#2f6fc0"/><path d="M6 10a13 13 0 0 1 22 0Q20 4 12 12Z" fill="#8fc0f0"/><path d="M7 17L17 13 25 18 16 26Z" fill="#f2f2f2" stroke="#c9c9c9"/><path d="M7 17L16 21 25 18" fill="none" stroke="#9a9a9a" stroke-width="1.200"/><path d="M4 20Q10 30 22 27Q12 26 8 16Z" fill="#1f4f9a"/></svg>
<svg style="left:66.00px;top:541.20px;" width="17" height="17" viewBox="0 0 32 32"><text x="3" y="11" font-family="Liberation Sans,sans-serif" font-weight="bold" font-size="10" fill="#e02020">CAN</text><rect x="20" y="2" width="8" height="10" fill="#ddd" stroke="#222"/><path d="M5 20Q16 12 27 20V26H5Z" fill="#f2f2f2" stroke="#111" stroke-width="2"/><rect x="5" y="21" width="22" height="3" fill="#111"/><text x="17" y="31" font-family="Liberation Sans,sans-serif" font-weight="bold" font-size="7" fill="#2a6fd0">PCI</text></svg>
<svg style="left:97.50px;top:541.20px;" width="17" height="17" viewBox="0 0 32 32"><path d="M14 3H28A2 2 0 0 1 30 5V15A2 2 0 0 1 28 17H24L20 21V17H14Z" fill="#f4f4f8"/><ellipse cx="12" cy="20" rx="8" ry="10" fill="#8a5aa8"/><circle cx="11" cy="12" r="6.500" fill="#8a5aa8"/><circle cx="9" cy="11" r="1.500" fill="#222"/><circle cx="14" cy="11" r="1.500" fill="#222"/><path d="M9 15H15L12 18.500Z" fill="#f08a2a"/><ellipse cx="12" cy="24" rx="4" ry="5" fill="#b99ad0"/></svg>
<svg style="left:130.50px;top:541.20px;" width="17" height="17" viewBox="0 0 32 32"><circle cx="16" cy="16" r="13" fill="#e23a2e"/><path d="M16 16L4.700 9.500A13 13 0 0 0 14 28.800Z" fill="#2fa84a"/><path d="M16 16L14 28.800A13 13 0 0 0 27.300 9.500Z" fill="#f8cf2a"/><path d="M4.700 9.500A13 13 0 0 1 27.300 9.500H16Z" fill="#e23a2e"/><circle cx="16" cy="16" r="6" fill="#fff"/><circle cx="16" cy="16" r="4.600" fill="#3f7fe0"/></svg>
<svg style="left:162.00px;top:541.20px;" width="17" height="17" viewBox="0 0 32 32"><path d="M3 6H13L15 9H29V27H3Z" fill="#f2c84a" stroke="#c99a2a"/><rect x="5" y="10" width="22" height="15" fill="#fbe9a0"/><rect x="8" y="7" width="4" height="3" fill="#4fa84a"/><rect x="13" y="7" width="4" height="3" fill="#e04a3a"/><rect x="18" y="7" width="4" height="3" fill="#3a7fd0"/><path d="M8 19H24V28H8Z" fill="#5aa8e8"/><rect x="11" y="22" width="10" height="3" fill="#cfe6fa"/></svg>
<svg style="left:194.50px;top:541.20px;" width="17" height="17" viewBox="0 0 32 32"><path d="M24 6Q10 2 6 14Q4 24 14 27" fill="none" stroke="#5a8fd8" stroke-width="2.600"/><path d="M12 10H26" stroke="#e8743a" stroke-width="2.600"/><path d="M19 8Q17 20 15 27" fill="none" stroke="#e8743a" stroke-width="2.800"/><path d="M13 18H23" stroke="#e8743a" stroke-width="2.200"/></svg>
<svg style="left:227.00px;top:541.20px;" width="17" height="17" viewBox="0 0 32 32"><rect x="13" y="2" width="12" height="22" fill="#c9ccd0" stroke="#8f9499"/><rect x="15" y="5" width="3" height="3" fill="#4fb84a"/><rect x="15" y="10" width="8" height="2" fill="#9a9ea3"/><path d="M3 18H18V27H3Z" fill="#b3b8be" stroke="#7f858c"/><path d="M5 18L8 14H16L18 18Z" fill="#dfe2e6"/><rect x="20" y="23" width="6" height="3" fill="#555"/></svg>
<svg style="left:259.25px;top:540.95px;" width="17.5" height="17.5" viewBox="0 0 32 32"><rect x="4" y="0" width="25" height="30" fill="#f8ead0"/><rect x="4" y="0" width="25" height="3" fill="#f2a83a"/><rect x="4" y="27" width="25" height="3" fill="#f2b86a"/><circle cx="16.500" cy="15" r="10.500" fill="#f3d3cc"/><circle cx="16.500" cy="15" r="3" fill="#9a2a24"/><g fill="#c9524c"><circle cx="11" cy="9" r="1.800"/><circle cx="22" cy="9" r="1.800"/><circle cx="10" cy="19" r="1.800"/><circle cx="22" cy="20" r="1.800"/><circle cx="16" cy="7" r="1.500"/><circle cx="16" cy="23" r="1.500"/><circle cx="8" cy="14" r="1.500"/><circle cx="25" cy="14" r="1.500"/></g></svg>
<svg style="left:291.50px;top:541.20px;" width="17" height="17" viewBox="0 0 32 32"><path d="M7 3H21L26 8V29H7Z" fill="#f4f6f4" stroke="#a9b0a9"/><rect x="7" y="20" width="19" height="9" fill="#5ab83a"/><path d="M10 18V10H13V18M15 18V13H18V18" stroke="#4a4a4a" stroke-width="1.500" fill="none"/><path d="M28 3L18 19" stroke="#e8b83a" stroke-width="3"/><path d="M28 3L29 1" stroke="#d03a3a" stroke-width="3"/></svg>
<svg style="left:885.4px;top:549.6px;" width="5" height="3.200" viewBox="0 0 8 5.200"><path d="M0 5.200L4 0 8 5.200Z" fill="#fff"/></svg>
<svg style="left:896.5px;top:547.5px;" width="9.500" height="8.500" viewBox="0 0 19 17"><path d="M2 1V16" stroke="#fff" stroke-width="2"/><path d="M3 2H12V9H3Z" fill="#fff"/><circle cx="13.500" cy="11.500" r="4.800" fill="#e0302a"/><path d="M11.500 9.500L15.500 13.500M15.500 9.500L11.500 13.500" stroke="#fff" stroke-width="1.500"/></svg>
<svg style="left:909.3px;top:547.5px;" width="8.500" height="8.500" viewBox="0 0 17 17"><rect x="5" y="2" width="11" height="8" fill="none" stroke="#fff" stroke-width="1.600"/><path d="M10.500 10V14M7 14.500H14M1 3V15M1 8H5" stroke="#fff" stroke-width="1.500"/></svg>
<svg style="left:921.8px;top:547.3px;" width="9" height="8.800" viewBox="0 0 18 17.600"><path d="M1 6H4.500L9 2V15.600L4.500 11.600H1Z" fill="#fff"/><path d="M11.500 5.500Q14 8.800 11.500 12M14 3.500Q18 8.800 14 14" fill="none" stroke="#e6efe9" stroke-width="1.300"/></svg>
<div style="left:998.00px;top:0.00px;width:1.00px;height:12.00px;background:#4f8f76;"></div>
<div style="left:998.00px;top:12.00px;width:1.00px;height:20.00px;background:#b9b9b9;"></div>
<div style="left:998.00px;top:32.00px;width:1.00px;height:410.00px;background:#f6f4ee;"></div>
<div style="left:998.00px;top:442.00px;width:1.00px;height:98.00px;background:#21573f;"></div>
</body></html>
